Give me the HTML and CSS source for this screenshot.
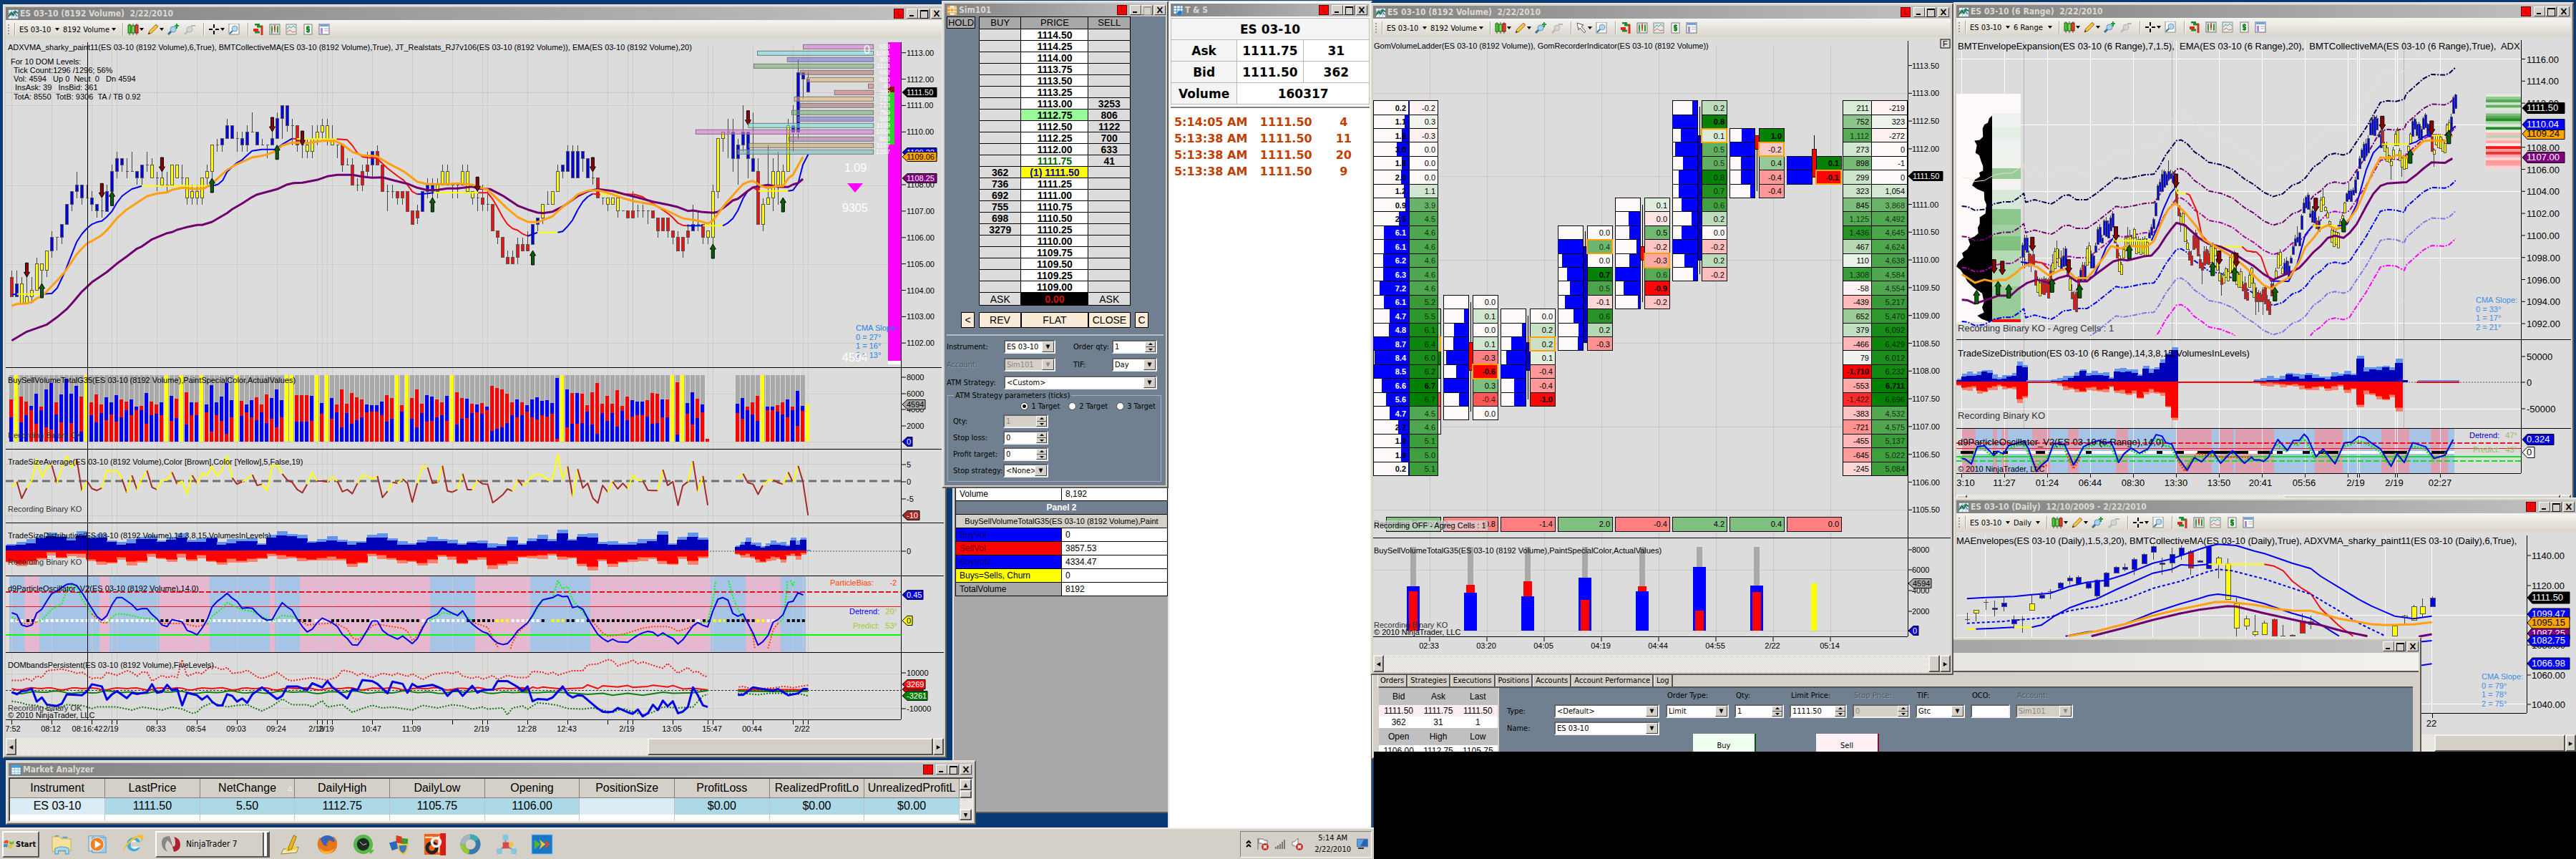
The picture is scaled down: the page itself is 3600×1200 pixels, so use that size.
FILE: index.html
```html
<!DOCTYPE html>
<html lang="en">
<head>
<meta charset="utf-8">
<title>NinjaTrader 7 workspace</title>
<link rel="stylesheet" href="styles.css">
</head>
<body>
<svg class="defs" aria-hidden="true">
  <symbol id="i-app" viewBox="0 0 16 16"><rect x="1" y="2" width="14" height="13" fill="#e8f2fa"/><path d="M1 6h14M1 10h14M6 2v13M11 2v13" stroke="#9ec3e0"/><path d="M1 12l4-6 3 4 3-6 4 3" fill="none" stroke="#1c7c2c" stroke-width="2"/><path d="M1 7l4 3 4-6 5 8" fill="none" stroke="#1d4fa0"/></symbol>
  <symbol id="i-candles" viewBox="0 0 16 16"><path d="M3 0v16M8 0v16M13 0v16" stroke="#444"/><rect x="1" y="2" width="4" height="11" fill="#4cc832" stroke="#1d6d12"/><rect x="6" y="3" width="4" height="10" fill="#7ce05c" stroke="#1d6d12"/><rect x="11" y="2" width="4" height="11" fill="#e8402c" stroke="#7c1208"/></symbol>
  <symbol id="i-pencil" viewBox="0 0 16 16"><path d="M1 15l2-5 9-9 3 3-9 9z" fill="#f4c63c" stroke="#a2701c"/><path d="M11 2l3 3 1-2-2-2z" fill="#e08878"/><path d="M1 15l1-3 2 2z" fill="#333"/></symbol>
  <symbol id="i-zoomin" viewBox="0 0 16 16"><path d="M1 15l5-5" stroke="#3a6ea0" stroke-width="3"/><circle cx="8" cy="8" r="4" fill="#a8d4f0" stroke="#5b93c0"/><path d="M13 0v7M10 3h6" stroke="#16a034" stroke-width="2"/></symbol>
  <symbol id="i-zoomout" viewBox="0 0 16 16"><path d="M1 15l5-5" stroke="#bbb" stroke-width="3"/><circle cx="8" cy="8" r="4" fill="#d6d6d6" stroke="#b4b4b4"/><path d="M10 3h6" stroke="#b4b4b4" stroke-width="2"/></symbol>
  <symbol id="i-cross" viewBox="0 0 16 16"><path d="M8 1v5M8 10v5M1 8h5M10 8h5" stroke="#000" stroke-width="2"/></symbol>
  <symbol id="i-cursor" viewBox="0 0 16 16"><path d="M2 1l9 3-3 2 6 7-2 2-6-7-2 3z" fill="#fff" stroke="#555"/></symbol>
  <symbol id="i-doc" viewBox="0 0 16 16"><rect x="1" y="0" width="14" height="15" fill="#fff" stroke="#888"/><path d="M2 14l5-5" stroke="#3a6ea0" stroke-width="2"/><circle cx="9" cy="7" r="4" fill="#b6d8ee" stroke="#6a98c0"/></symbol>
  <symbol id="i-trader" viewBox="0 0 16 16"><path d="M3 1h7M6 4h8M3 12h7" stroke="#1e8c28" stroke-width="3"/><path d="M1 9h7" stroke="#e02818" stroke-width="4"/><path d="M13 3v13" stroke="#d03020" stroke-width="3"/></symbol>
  <symbol id="i-bars" viewBox="0 0 16 16"><rect x="1" y="1" width="14" height="14" fill="#dfe6df" stroke="#777"/><path d="M4 3v11M8 2v10M12 3v10" stroke="#333"/><rect x="3" y="5" width="2" height="6" fill="#2ba01c"/><rect x="7" y="4" width="2" height="5" fill="#e03020"/><rect x="11" y="5" width="2" height="7" fill="#2ba01c"/></symbol>
  <symbol id="i-ind" viewBox="0 0 16 16"><rect x="1" y="1" width="14" height="14" fill="#e4e8e6" stroke="#888"/><path d="M2 8l3-4 3 2 3-3 3 3" fill="none" stroke="#3ca890"/><path d="M2 12l4-3 4 3 4-1" fill="none" stroke="#e06050"/></symbol>
  <symbol id="i-cash" viewBox="0 0 16 16"><rect x="3" y="1" width="11" height="14" fill="#fff" stroke="#777"/><path d="M11 5H7v3h3v3H6M8.500 3v10" fill="none" stroke="#1c9020" stroke-width="2"/></symbol>
  <symbol id="i-prop" viewBox="0 0 16 16"><rect x="1" y="0" width="14" height="15" fill="#fff" stroke="#668"/><rect x="2" y="1" width="12" height="3" fill="#6aa4dc"/><rect x="3" y="6" width="3" height="8" fill="#a888e0"/><path d="M8 7h6M8 10h6" stroke="#aaa"/></symbol>
</svg>

<main class="desktop">
  <div class="monitors">
    <section class="monitor-left">
      <footer class="taskbar">
        <button class="start"><svg width="16" height="16" viewBox="0 0 16 16"><path d="M1 4q3-3 6 0l-1 4q-3-2-6 0z" fill="#e85020"/><path d="M8 4q3 2 7 0l-1 4q-3 2-6 0z" fill="#7cbc28"/><path d="M0 9q3-2 6 0l-1 4q-3-2-6 0z" fill="#3c8cd8"/><path d="M7 9q3 2 6 0l-1 5q-3 1-6-1z" fill="#f4c020"/></svg>Start</button>
        <svg class="task-icon" viewBox="0 0 32 32"><path d="M2 5h10l3 3h14v18H2z" fill="#f5e19a" stroke="#c8a850"/><path d="M6 4h5M17 6h7" stroke="#4aa0e0" stroke-width="2"/><path d="M6 30v-8q10-5 20 0v8h-5v-5H11v5z" fill="#a8d8ee" stroke="#4b90b8"/></svg>
        <svg class="task-icon" viewBox="0 0 32 32"><path d="M3 4h22v22H3z" fill="#bfe0f4" stroke="#5b9cc8"/><path d="M8 6h20v22H8z" fill="#9fcbe8" stroke="#5b9cc8"/><circle cx="15" cy="16" r="10" fill="#f08020" stroke="#fff"/><path d="M12 10l9 6-9 6z" fill="#fff"/></svg>
        <svg class="task-icon" viewBox="0 0 32 32"><path d="M26 19a10 10 0 1 1 0-6H12v6z" fill="#38a8e8"/><path d="M12 13h9q-4-7-9 0zM12 19q4 6 10 2l6-2z" fill="#fff"/><path d="M2 29Q-1 22 10 11T30 3q2 5-4 10 3-7-2-7T10 15 2 29z" fill="#f4c030"/></svg>
        <button class="task-app"><svg width="30" height="24" viewBox="0 0 30 24"><path d="M13 1Q1 1 2 12q1 8 8 11-6-9 0-16 8 6 9 16z" fill="#888"/><path d="M13 0l3 14q4 4 5-2Q21 4 19 2q9 2 9 11 0 8-9 10z" fill="#b0202c"/></svg>NinjaTrader 7<i></i></button>
        <svg class="task-icon" viewBox="0 0 32 32"><path d="M4 23l22-3-3 8-22 2z" fill="#f0e8b0" stroke="#908030"/><path d="M8 20l14-2 3 5-17 3z" fill="#f4d040"/><path d="M19 3l4 2-7 18-5 2 1-6z" fill="#e8b820" stroke="#907010"/></svg>
        <svg class="task-icon" viewBox="0 0 32 32"><circle cx="16" cy="16" r="13" fill="#3464b8"/><path d="M5 6Q0 14 3 22q6 10 17 7t10-17Q28 6 24 4q4 7 1 9Q17 7 17 13q-4 1-1 5-6 1-8-5z" fill="#e8741c"/><path d="M3 18q8 14 24 4-8 12-19 6z" fill="#f8b42c"/></svg>
        <svg class="task-icon" viewBox="0 0 32 32"><circle cx="16" cy="16" r="14" fill="#56b848"/><path d="M22 24h10l-5 6z" fill="#56b848"/><circle cx="16" cy="16" r="9" fill="#1c2c24"/><path d="M11 12l5 5 5-2" fill="none" stroke="#dde"/></svg>
        <svg class="task-icon" viewBox="0 0 32 32"><path d="M12 3l8 2 1 10-9-1z" fill="#d83c1c"/><path d="M2 14l10-3 3 11-9 3z" fill="#2c68c0"/><path d="M20 7l9 1v12l-8-3z" fill="#3c9c30"/><path d="M15 17l13-1q1 10-6 14-7-3-7-13z" fill="#3878d0" stroke="#f0c828" stroke-width="2"/></svg>
        <svg class="task-icon" viewBox="0 0 32 32"><rect x="1" y="1" width="30" height="30" fill="#f06018"/><path d="M2 6h12M22 4v24" stroke="#fff0c0" stroke-width="2"/><rect x="24" width="8" height="32" fill="#d81c18"/><circle cx="12" cy="21" r="7" fill="none" stroke="#222" stroke-width="5"/><circle cx="18" cy="13" r="6" fill="none" stroke="#eee" stroke-width="4"/></svg>
        <svg class="task-icon" viewBox="0 0 32 32"><circle cx="16" cy="16" r="11" fill="none" stroke="#3c78a8" stroke-width="7"/><path d="M5 16a11 11 0 0 1 11-11" fill="none" stroke="#a8b4bc" stroke-width="7"/><path d="M5 16a11 11 0 0 0 9 11" fill="none" stroke="#98c838" stroke-width="7"/><path d="M16 5a11 11 0 0 1 9 5" fill="none" stroke="#38b0b0" stroke-width="7"/></svg>
        <svg class="task-icon" viewBox="0 0 32 32"><path d="M15 8v9L6 25M15 17l12 8M15 17l8-2" stroke="#889" fill="none" stroke-width="2"/><rect x="11" y="2" width="8" height="8" fill="#84c8e0"/><rect x="11" y="13" width="9" height="9" fill="#d84848"/><rect x="2" y="22" width="8" height="8" fill="#84c8e0"/><rect x="23" y="22" width="8" height="8" fill="#84c8e0"/><rect x="20" y="13" width="6" height="6" fill="#f0c430"/></svg>
        <svg class="task-icon" viewBox="0 0 32 32"><rect x="1" y="2" width="30" height="28" fill="#1878c8" stroke="#90c8f0"/><path d="M5 9l9 7-9 7z" fill="#58b030"/><path d="M12 9l9 7-9 7 3-7z" fill="#f4c828"/><path d="M19 9l9 7-9 7 3-7z" fill="#e04828"/></svg>
        <div class="tray">
          <svg width="8" height="14" viewBox="0 0 8 14"><path d="M1 6l3-3 3 3M1 11l3-3 3 3" fill="none" stroke="#000" stroke-width="2"/></svg>
          <svg width="16" height="18" viewBox="0 0 16 18"><path d="M1 1v16M2 2h6l2 2h4v6H8L6 8H2z" fill="#fff" stroke="#666"/><circle cx="11" cy="13" r="5" fill="#d82828"/><path d="M9 11l4 4M13 11l-4 4" stroke="#fff" stroke-width="2"/></svg>
          <svg width="16" height="14" viewBox="0 0 16 14"><path d="M2 14v-3M5 14V9M8 14V7M11 14V4M14 14V1" stroke="#777" stroke-width="2"/></svg>
          <svg width="16" height="18" viewBox="0 0 16 18"><path d="M1 6h3l5-5v15l-5-5H1z" fill="#fff" stroke="#777"/><circle cx="11" cy="13" r="5" fill="#d82828"/><path d="M9 11l4 4M13 11l-4 4" stroke="#fff" stroke-width="2"/></svg>
          <div class="clock"><span>5:14 AM</span><span>2/22/2010</span></div>
          <svg width="16" height="16" viewBox="0 0 16 16"><rect y="1" width="16" height="11" fill="#2464b0" stroke="#88b"/><path d="M1 2h9l-5 9H1z" fill="#58a0e0"/><path d="M2 14h8" stroke="#333" stroke-width="2"/></svg>
        </div>
      </footer>
    </section>
    <section class="monitor-right"></section>
  </div>

  <!-- 8192 volume chart -->
  <section class="window win-main">
    <header class="titlebar"><svg class="ico"><use href="#i-app"/></svg><h2>ES 03-10 (8192 Volume)&nbsp; 2/22/2010</h2><button class="lk">L</button><button class="wb min" aria-label="Minimize"></button><button class="wb max" aria-label="Maximize"></button><button class="wb close" aria-label="Close">×</button></header>
    <div class="toolbar" data-period="8192 Volume" data-cursor="cross"></div>
    <svg class="chart" id="chart-main" viewBox="8 54 1311 977">
      <g class="plot"></g>
      <g class="t11">
        <text x="11" y="70">ADXVMA_sharky_paint11(ES 03-10 (8192 Volume),6,True), BMTCollectiveMA(ES 03-10 (8192 Volume),True), JT_Realstats_RJ7v106(ES 03-10 (8192 Volume)), EMA(ES 03-10 (8192 Volume),20)</text>
        <text x="15" y="90">For 10 DOM Levels:</text>
        <text x="19" y="102">Tick Count:1296 /1296; 56%</text>
        <text x="19" y="114">Vol: 4594 &#160; Up 0 &#160;Neut &#160;0 &#160; Dn 4594</text>
        <text x="21" y="126">InsAsk: 39 &#160; InsBid: 361</text>
        <text x="19" y="139">TotA: 8550 &#160;TotB: 9306 &#160;TA / TB 0.92</text>
        <text x="11" y="535">BuySellVolumeTotalG35(ES 03-10 (8192 Volume),PaintSpecialColor,ActualValues)</text>
        <text x="11" y="612" class="dim">Recording Binary OK</text>
        <text x="11" y="649">TradeSizeAverage(ES 03-10 (8192 Volume),Color [Brown],Color [Yellow],5,False,19)</text>
        <text x="11" y="715" class="dim">Recording Binary KO</text>
        <text x="11" y="752">TradeSizeDistribution(ES 03-10 (8192 Volume),14,3,8,15,VolumesInLevels)</text>
        <text x="11" y="789" class="dim">Recording Binary KO</text>
        <text x="11" y="826">d9ParticleOscillator_V2(ES 03-10 (8192 Volume),14,0)</text>
        <text x="11" y="933">DOMbandsPersistent(ES 03-10 (8192 Volume),FiveLevels)</text>
        <text x="11" y="993" class="dim">Recording Binary OK</text>
        <text x="11" y="1003">© 2010 NinjaTrader, LLC</text>
        <text x="1160" y="818" fill="#ff4500">ParticleBias:</text><text x="1253" y="818" fill="#ff4500" text-anchor="end">-2</text>
        <text x="1187" y="858" fill="#00f">Detrend:</text><text x="1254" y="858" fill="#9acd32" text-anchor="end">20°</text>
        <text x="1192" y="878" fill="#9acd32">Predict:</text><text x="1254" y="878" fill="#9acd32" text-anchor="end">53°</text>
        <g fill="#1e82e6"><text x="1196" y="462">CMA Slope:</text><text x="1196" y="475">0 = 27°</text><text x="1196" y="487">1 = 16°</text><text x="1196" y="500">2 = 13°</text></g>
      </g>
      <g class="t16" fill="#fff"><text x="1207" y="75">0</text><text x="1180" y="240">1.09</text><text x="1177" y="296">9305</text><text x="1177" y="505">4594</text></g>
    </svg>
    <div class="hscroll"><button aria-label="Scroll left">◂</button><i class="thumb thumb-main"></i><button aria-label="Scroll right">▸</button></div>
  </section>

  <!-- data box -->
  <section class="window win-data">
    <table class="databox">
      <tr><td>Volume</td><td>8,192</td></tr>
      <tr class="panel"><th colspan="2">Panel 2</th></tr>
      <tr class="sub"><td colspan="2">BuySellVolumeTotalG35(ES 03-10 (8192 Volume),Paint</td></tr>
      <tr><td class="blue">BuyVol</td><td>0</td></tr>
      <tr><td class="red">SellVol</td><td>3857.53</td></tr>
      <tr><td class="blue">BuyVol2</td><td>4334.47</td></tr>
      <tr><td class="yellow">Buys=Sells, Churn</td><td>0</td></tr>
      <tr><td class="gray">TotalVolume</td><td>8192</td></tr>
    </table>
  </section>

  <!-- market analyzer -->
  <section class="window win-analyzer">
    <header class="titlebar"><svg class="ico" viewBox="0 0 16 16"><rect x="1" y="1" width="14" height="14" fill="#fff" stroke="#48a"/><rect x="1" y="1" width="14" height="4" fill="#48a0e0"/><path d="M1 8h14M1 12h14M6 5v10M11 5v10" stroke="#8bd"/></svg><h2>Market Analyzer</h2><button class="lk">L</button><button class="wb min" aria-label="Minimize"></button><button class="wb max" aria-label="Maximize"></button><button class="wb close" aria-label="Close">×</button></header>
    <div class="analyzer-body">
      <div class="analyzer-view">
        <table class="analyzer">
          <tr><th>Instrument</th><th>LastPrice</th><th class="sorted">NetChange</th><th>DailyHigh</th><th>DailyLow</th><th>Opening</th><th>PositionSize</th><th>ProfitLoss</th><th>RealizedProfitLo</th><th>UnrealizedProfitL</th></tr>
          <tr class="row"><td class="pale">ES 03-10</td><td>1111.50</td><td>5.50</td><td>1112.75</td><td>1105.75</td><td>1106.00</td><td class="pale"></td><td>$0.00</td><td>$0.00</td><td>$0.00</td></tr>
          <tr class="rest"><td></td><td></td><td></td><td></td><td></td><td></td><td></td><td></td><td></td><td></td></tr>
        </table>
      </div>
      <div class="vscroll"><button aria-label="Scroll up">▴</button><i class="vthumb"></i><button aria-label="Scroll down">▾</button></div>
    </div>
  </section>

  <!-- time and sales -->
  <section class="window win-ts">
    <header class="titlebar"><svg class="ico" viewBox="0 0 16 16"><rect x="1" y="1" width="14" height="12" fill="#fff" stroke="#48a"/><path d="M1 5h14M1 9h14M6 1v12M11 1v12" stroke="#48c"/><path d="M5 13l5-5 5 3-5 5z" fill="#2878d0"/></svg><h2>T &amp; S</h2><button class="lk">L</button><button class="wb min" aria-label="Minimize"></button><button class="wb max" aria-label="Maximize"></button><button class="wb close" aria-label="Close">×</button></header>
    <table class="ts-head">
      <tr><th colspan="3">ES 03-10</th></tr>
      <tr><th>Ask</th><td>1111.75</td><td>31</td></tr>
      <tr><th>Bid</th><td>1111.50</td><td>362</td></tr>
      <tr><th>Volume</th><td colspan="2">160317</td></tr>
    </table>
    <table class="ts-list">
      <tr><td>5:14:05 AM</td><td>1111.50</td><td>4</td></tr>
      <tr><td>5:13:38 AM</td><td>1111.50</td><td>11</td></tr>
      <tr><td>5:13:38 AM</td><td>1111.50</td><td>20</td></tr>
      <tr><td>5:13:38 AM</td><td>1111.50</td><td>9</td></tr>
    </table>
  </section>

  <!-- SuperDOM -->
  <section class="window win-dom">
    <header class="titlebar"><svg class="ico" viewBox="0 0 16 16"><rect x="1" y="1" width="14" height="14" fill="#f0ede0"/><rect x="1" y="1" width="4" height="14" fill="#e8a040"/><rect x="6" y="4" width="4" height="8" fill="#e8a040"/><rect x="11" y="1" width="4" height="14" fill="#e8b868"/><path d="M1 5h14M1 10h14" stroke="#fff"/></svg><h2>Sim101</h2><button class="lk">L</button><button class="wb min" aria-label="Minimize"></button><button class="wb max off" aria-label="Maximize"></button><button class="wb close" aria-label="Close">×</button></header>
    <div class="dom-body">
      <div class="dom-top"><button class="hold">HOLD</button><table class="ladder" id="ladder"><tr><th>BUY</th><th>PRICE</th><th>SELL</th></tr></table></div>
      <div class="dom-actions"><button class="sm">&lt;</button><div><button>REV</button><button>FLAT</button><button>CLOSE</button></div><button class="sm">C</button></div>
      <hr>
      <div class="dom-form">
        <label for="ins">Instrument:</label><span class="combo"><select id="ins"><option>ES 03-10</option></select></span><label for="oq" class="second">Order qty:</label><span class="spin"><input id="oq" value="1"><i></i></span>
        <label for="acc" class="off">Account:</label><span class="combo off"><select id="acc" disabled><option>Sim101</option></select></span><label for="tif" class="second">TIF:</label><span class="combo"><select id="tif"><option>Day</option></select></span>
        <label for="atm">ATM Strategy:</label><span class="combo wide"><select id="atm"><option>&lt;Custom&gt;</option></select></span>
      </div>
      <fieldset>
        <legend>ATM Strategy parameters (ticks)</legend>
        <div class="radios"><label><input type="radio" name="tg" checked>1 Target</label><label><input type="radio" name="tg">2 Target</label><label><input type="radio" name="tg">3 Target</label></div>
        <div class="params">
          <label for="q">Qty:</label><span class="spin off"><input id="q" value="1" disabled><i></i></span>
          <label for="sl">Stop loss:</label><span class="spin"><input id="sl" value="0"><i></i></span>
          <label for="pt">Profit target:</label><span class="spin"><input id="pt" value="0"><i></i></span>
          <label for="ss">Stop strategy:</label><span class="combo"><select id="ss"><option>&lt;None&gt;</option></select></span>
        </div>
      </fieldset>
    </div>
  </section>

  <!-- 6 range chart -->
  <section class="window win-range">
    <header class="titlebar"><svg class="ico"><use href="#i-app"/></svg><h2>ES 03-10 (6 Range)&nbsp; 2/22/2010</h2><button class="lk">L</button><button class="wb min" aria-label="Minimize"></button><button class="wb max" aria-label="Maximize"></button><button class="wb close" aria-label="Close">×</button></header>
    <div class="toolbar" data-period="6 Range" data-cursor="cross"></div>
    <svg class="chart" id="chart-range" viewBox="2734 51 859 640">
      <defs><clipPath id="clip-range"><rect x="2734" y="57" width="789" height="412"/></clipPath></defs>
      <g class="plot"></g>
      <g class="t13">
        <svg x="2734" y="52" width="789" height="20" viewBox="2734 52 789 20"><text x="2736" y="69">BMTEnvelopeExpansion(ES 03-10 (6 Range),7,1.5),&#160; EMA(ES 03-10 (6 Range),20),&#160; BMTCollectiveMA(ES 03-10 (6 Range),True),&#160; ADX</text></svg>
        <text x="2736" y="463" class="dim">Recording Binary KO - Agreg Cells : 1</text>
        <text x="2736" y="498">TradeSizeDistribution(ES 03-10 (6 Range),14,3,8,15,VolumesInLevels)</text>
        <text x="2736" y="585" class="dim">Recording Binary KO</text>
        <text x="2736" y="622">d9ParticleOscillator_V2(ES 03-10 (6 Range),14,0)</text>
      </g>
      <g class="t11">
        <text x="2736" y="659">© 2010 NinjaTrader, LLC</text>
        <text x="3451" y="612" fill="#0000c8">Detrend:</text><text x="3518" y="612" fill="#9ab862" text-anchor="end">47°</text>
        <text x="3456" y="632" fill="#9ab862">Predict:</text><text x="3518" y="632" fill="#9ab862" text-anchor="end">43°</text>
        <g fill="#3b8ee8"><text x="3460" y="423">CMA Slope:</text><text x="3460" y="436">0 = 33°</text><text x="3460" y="448">1 = 17°</text><text x="3460" y="461">2 = 21°</text></g>
      </g>
    </svg>
    <div class="hscroll"><button aria-label="Scroll left">◂</button><i class="thumb thumb-range"></i><button aria-label="Scroll right">▸</button></div>
  </section>

  <!-- daily chart -->
  <section class="window win-daily">
    <header class="titlebar"><svg class="ico"><use href="#i-app"/></svg><h2>ES 03-10 (Daily)&nbsp; 12/10/2009 - 2/22/2010</h2><button class="lk">L</button><button class="wb min" aria-label="Minimize"></button><button class="wb max" aria-label="Maximize"></button><button class="wb close" aria-label="Close">×</button></header>
    <div class="toolbar" data-period="Daily" data-cursor="cross"></div>
    <svg class="chart" id="chart-daily" viewBox="2734 743 866 283">
      <g class="plot"></g>
      <svg class="t13" x="2730" y="743" width="800" height="22" viewBox="2730 743 800 22"><text x="2734" y="760">MAEnvelopes(ES 03-10 (Daily),1.5,3,20), BMTCollectiveMA(ES 03-10 (Daily),True), ADXVMA_sharky_paint11(ES 03-10 (Daily),6,True),</text></svg>
      <g class="t11" fill="#3b8ee8"><text x="3468" y="949">CMA Slope:</text><text x="3468" y="962">0 = 79°</text><text x="3468" y="974">1 = 78°</text><text x="3468" y="987">2 = 75°</text></g>
    </svg>
    <div class="hscroll"><button aria-label="Scroll left">◂</button><i class="thumb thumb-daily"></i><button aria-label="Scroll right">▸</button></div>
  </section>

  <!-- control center -->
  <section class="window win-cc">
    <header class="titlebar"><h2></h2><button class="wb min" aria-label="Minimize"></button><button class="wb max" aria-label="Maximize"></button><button class="wb close" aria-label="Close">×</button></header>
    <div class="menu"></div>
    <nav class="tabs"><button class="on">Orders</button><button>Strategies</button><button>Executions</button><button>Positions</button><button>Accounts</button><button>Account Performance</button><button>Log</button></nav>
    <div class="cc-body">
      <table class="quotes">
        <tr class="h"><th>Bid</th><th>Ask</th><th>Last</th></tr>
        <tr class="p"><td>1111.50</td><td>1111.75</td><td>1111.50</td></tr>
        <tr><td>362</td><td>31</td><td>1</td></tr>
        <tr class="h"><th>Open</th><th>High</th><th>Low</th></tr>
        <tr><td>1106.00</td><td>1112.75</td><td>1105.75</td></tr>
      </table>
      <form class="entry">
        <div class="names"><label for="ty">Type:</label><span class="combo"><select id="ty"><option>&lt;Default&gt;</option></select></span><label for="nm">Name:</label><span class="combo"><select id="nm"><option>ES 03-10</option></select></span></div>
        <div class="order">
          <div class="fields">
            <div class="f88"><label for="ot">Order Type:</label><span class="combo"><select id="ot"><option>Limit</option></select></span></div>
            <div class="f69"><label for="cq">Qty:</label><span class="spin"><input id="cq" value="1"><i></i></span></div>
            <div class="f80"><label for="lp">Limit Price:</label><span class="spin"><input id="lp" value="1111.50"><i></i></span></div>
            <div class="f80"><label for="sp" class="off">Stop Price:</label><span class="spin off"><input id="sp" value="0" disabled><i></i></span></div>
            <div class="f69"><label for="ct">TIF:</label><span class="combo"><select id="ct"><option>Gtc</option></select></span></div>
            <div class="f54"><label for="oco">OCO:</label><span class="spin"><input id="oco" value=""></span></div>
            <div class="f80"><label for="ca" class="off">Account:</label><span class="combo off"><select id="ca" disabled><option>Sim101</option></select></span></div>
          </div>
          <div class="buysell"><button type="button" class="buy">Buy</button><button type="button" class="sell">Sell</button></div>
        </div>
      </form>
    </div>
  </section>

  <!-- volume ladder chart -->
  <section class="window win-gom">
    <header class="titlebar"><svg class="ico"><use href="#i-app"/></svg><h2>ES 03-10 (8192 Volume)&nbsp; 2/22/2010</h2><button class="lk">L</button><button class="wb min" aria-label="Minimize"></button><button class="wb max" aria-label="Maximize"></button><button class="wb close" aria-label="Close">×</button></header>
    <div class="toolbar" data-period="8192 Volume" data-cursor="cursor"></div>
    <svg class="chart" id="chart-gom" viewBox="1919 52 807 863">
      <g class="plot"></g>
      <g class="t11">
        <text x="1920" y="68">GomVolumeLadder(ES 03-10 (8192 Volume)), GomRecorderIndicator(ES 03-10 (8192 Volume))</text>
        <text x="1920" y="735">Recording Binary KO</text>
        <rect x="1920" y="727" width="159" height="14" fill="#dcdcdc" opacity=".7"/>
        <text x="1920" y="738">Recording OFF - Agreg Cells : 1</text>
        <text x="1920" y="773">BuySellVolumeTotalG35(ES 03-10 (8192 Volume),PaintSpecialColor,ActualValues)</text>
        <text x="1920" y="877" class="dim">Recording Binary KO</text>
        <text x="1920" y="887">© 2010 NinjaTrader, LLC</text>
        <rect x="2712" y="55" width="13" height="12" fill="none" stroke="#000"/><text x="2715" y="65">F</text>
      </g>
    </svg>
    <div class="hscroll"><button aria-label="Scroll left">◂</button><i class="thumb thumb-gom"></i><button aria-label="Scroll right">▸</button></div>
  </section>
  <div class="offscreen"></div>
</main>
<script src="app.js"></script>
</body>
</html>
```
FILE: styles.css
```css
* { box-sizing: border-box; }
body { margin: 0; background: #000; font: 11px "DejaVu Sans Condensed", "DejaVu Sans", sans-serif; color: #000; }
button, select, input { font: inherit; color: inherit; margin: 0; padding: 0; border: 0; border-radius: 0; }
table { border-collapse: collapse; }
.defs { position: absolute; width: 0; height: 0; }
.desktop { position: relative; height: 100vh; min-height: 1200px; overflow: hidden; }
.monitors { display: grid; grid-template-columns: 1920fr 1680fr; height: 100%; background: #0a3a76; }
.monitor-left { display: flex; flex-direction: column; justify-content: flex-end; }
.offscreen { position: absolute; left: 53.334%; right: 0; top: 1050px; bottom: 0; background: #000; z-index: 20; }

/* windows */
.window { position: absolute; display: flex; flex-direction: column; background: #d4d0c8; padding: 2px; border: 2px solid; border-color: #e8e5de #5a5a58 #5a5a58 #e8e5de; }
.win-main { left: .111%; width: 36.639%; top: 6px; z-index: 1; }
.win-data { left: 36.972%; width: 8.472%; top: 676px; height: 460px; z-index: 2; background: #a8a8a8; }
.win-analyzer { left: .222%; width: 37.667%; top: 1062px; z-index: 3; }
.win-ts { left: 45.333%; width: 7.945%; top: 1px; height: 1157px; z-index: 4; background: #fff; }
.win-dom { left: 36.555%; width: 8.806%; top: 1px; z-index: 5; }
.win-range { left: 75.833%; width: 24.084%; top: 3px; z-index: 5; }
.win-daily { left: 75.833%; width: 24.278%; top: 695px; z-index: 6; }
.win-cc { left: 53.25%; width: 40.75%; top: 890px; height: 170px; z-index: 7; }
.win-gom { left: 53.194%; width: 22.639%; top: 4px; z-index: 8; }
.titlebar { display: flex; align-items: center; height: 18px; padding: 0 2px 0 3px; background: linear-gradient(90deg, #828282, #c2c2c2); flex: none; }
.titlebar h2 { flex: 1; margin: 0 0 0 2px; font: bold 12px "DejaVu Sans Condensed", sans-serif; color: #dcd9d2; white-space: nowrap; }
.win-dom .titlebar { padding-right: 0; }
.win-ts .titlebar { padding-right: 3px; }
.ico { width: 15px; height: 15px; flex: none; }
.lk { width: 14px; height: 14px; background: #f00; border: 1px solid #600; color: #900; font-size: 10px; line-height: 12px; margin-right: 4px; flex: none; }
.wb { position: relative; width: 16px; height: 14px; background: #d4d0c8; border: 1px solid; border-color: #fff #404040 #404040 #fff; line-height: 11px; font-size: 15px; font-weight: bold; flex: none; }
.wb.close { margin-left: 2px; }
.wb.min::after { content: ""; position: absolute; left: 3px; bottom: 2px; width: 6px; height: 2px; background: #000; }
.wb.max::after { content: ""; position: absolute; left: 2px; top: 1px; width: 9px; height: 9px; border: 1px solid #000; border-top-width: 2px; }
.wb.off::after { border-color: #a09c94; }
.toolbar { display: flex; align-items: center; height: 26px; padding-left: 3px; background: linear-gradient(#f5f4f0, #d9d5cb); flex: none; }
.grip { width: 3px; height: 14px; border-left: 2px dotted #a09c94; margin-right: 2px; }
.toolbar b { width: 2px; height: 18px; border-left: 1px solid #a8a49a; border-right: 1px solid #fff; margin: 0 5px 0 4px; flex: none; }
.toolbar .pick { display: flex; align-items: center; margin-right: 5px; }
.toolbar .pick::after, .toolbar .drop::after { content: ""; border: 3px solid transparent; border-top: 4px solid #000; border-bottom: 0; }
.toolbar select { appearance: none; background: none; width: 50px; }
.toolbar .per select { width: 68px; }
.toolbar .per.short select { width: 48px; }
.toolbar .per.tiny select { width: 31px; }
.toolbar button { display: flex; align-items: center; background: none; margin-right: 7px; }
.toolbar .drop { margin-right: 5px; gap: 1px; }
.toolbar svg { width: 16px; height: 16px; }
.chart { display: block; width: 100%; height: auto; background: #dcdcdc; flex: none; font-family: "Liberation Sans", Arial, sans-serif; }
.plot { font-size: 11px; }
.t11 { font-size: 11px; }
.t13 { font-size: 13px; }
.t16 { font-size: 16px; }
.dim { fill: #333; }
.crisp { shape-rendering: crispEdges; }
.hscroll { display: flex; height: 24px; background: repeating-conic-gradient(#fff 0 25%, #d4d0c8 0 50%) 0 0 / 2px 2px; flex: none; }
.hscroll button, .vscroll button, .thumb, .vthumb { background: #d4d0c8; border: 2px solid; border-color: #f4f2ee #555 #555 #f4f2ee; }
.hscroll button { width: 15px; font-size: 12px; line-height: 12px; }
.thumb { margin-left: auto; }
.thumb-main { width: 30.4%; }
.thumb-gom { width: 2%; }
.thumb-range { width: 45%; }
.thumb-daily { width: 21.1%; }

/* taskbar */
.taskbar { position: relative; z-index: 19; display: flex; align-items: center; height: 44px; padding: 2px 3px; background: #d4d0c8; border-top: 2px solid #f2f0ec; gap: 19px; }
.start, .task-app { display: flex; align-items: center; background: #d4d0c8; border: 2px solid; border-color: #fff #555 #555 #fff; height: 37px; }
.start { width: 52px; font-weight: bold; font-size: 11px; gap: 1px; margin-right: -3px; }
.task-app { position: relative; width: 160px; margin: 0 -4px; padding-left: 5px; gap: 6px; font-size: 12px; }
.task-app i { position: absolute; right: 0; top: 0; bottom: 0; width: 8px; border-left: 2px solid #555; border-right: 2px solid #555; background: #fff; }
.task-icon { width: 31px; height: 31px; flex: none; }
.tray { display: flex; align-items: center; gap: 8px; margin-left: auto; height: 37px; padding: 0 4px 0 7px; border: 1px solid; border-color: #808080 #fff #fff #808080; }
.clock { display: flex; flex-direction: column; align-items: center; line-height: 16px; margin-left: 8px; }

/* data box */
.databox { width: 100%; table-layout: fixed; background: #fff; }
.databox td, .databox th { height: 19px; padding: 0 5px; border: 1px solid #000; font: 12px "Liberation Sans", Arial, sans-serif; white-space: nowrap; }
.databox .panel th { background: #708090; color: #fff; font-weight: bold; }
.databox .sub td { background: #d4d0c8; text-align: center; font-size: 11px; }
.databox .blue { background: #00f; color: #000070; }
.databox .red { background: #f00; color: #700000; }
.databox .yellow { background: #ff0; }
.databox .gray { background: #a8a8a8; }

/* market analyzer */
.analyzer-body { display: flex; margin-top: 2px; border: 2px solid; border-color: #444 #eee #eee #444; background: #fff; }
.analyzer-view { flex: 1; min-width: 0; }
.analyzer { width: 100%; table-layout: fixed; font: 16px "Liberation Sans", Arial, sans-serif; }
.analyzer th { height: 26px; padding: 0; font-weight: normal; background: #d4d0c8; border-right: 1px solid #808080; border-bottom: 1px solid #808080; white-space: nowrap; }
.analyzer .sorted { position: relative; }
.analyzer .sorted::after { content: "△"; position: absolute; right: 2px; top: 8px; font-size: 9px; color: #fff; }
.analyzer td { padding: 0; text-align: center; border-right: 1px solid #c0c0c8; }
.analyzer .row td { height: 24px; background: #add8e6; }
.analyzer .row td.pale { background: #dcecf5; }
.analyzer .rest td { height: 8px; }
.vscroll { width: 17px; display: flex; flex-direction: column; flex: none; background: repeating-conic-gradient(#fff 0 25%, #d4d0c8 0 50%) 0 0 / 2px 2px; }
.vscroll button { height: 16px; font-size: 12px; line-height: 10px; }
.vthumb { height: 11px; margin-bottom: auto; }

/* time and sales */
.ts-head, .ts-list { width: 100%; font: bold 17px "DejaVu Sans", sans-serif; text-align: center; table-layout: fixed; }
.ts-head { margin-top: 2px; }
.ts-head td, .ts-head th { height: 30px; padding: 0; border: 1px solid #b8b8b8; }
.ts-head th { background: #f4f4f4; }
.ts-list { margin-top: 3px; padding-top: 8px; border-top: 2px solid #808080; border-collapse: separate; border-spacing: 0; color: #c04000; font-size: 16px; }
.ts-list td { height: 23px; padding: 0; white-space: nowrap; }
.ts-list td:first-child { width: 42%; text-align: left; padding-left: 5px; }
.ts-list td:nth-child(2) { width: 32%; }

/* superdom */
.dom-body { background: #708090; padding: 0 3px 5px; }
.dom-top { display: flex; gap: 5px; align-items: flex-start; }
.hold { width: 40px; height: 17px; background: #a8a8a8; border: 1px solid #000; font: 13px "Liberation Sans", sans-serif; }
.ladder { width: 212px; table-layout: fixed; font: bold 14px/14px "Liberation Sans", Arial, sans-serif; text-align: center; }
.ladder th:nth-child(2) { width: 94px; }
.ladder th { background: #a8a8a8; height: 17px; font: 13px/14px "Liberation Sans", Arial, sans-serif; }
.ladder th, .ladder td { border: 1px solid #000; padding: 0; }
.ladder td { height: 16px; background: #dcdcdc; }
.ladder td:nth-child(2) { background: #fff; }
.ladder .high td:nth-child(2) { background: #98fb98; }
.ladder .ask td:nth-child(2) { color: #006400; }
.ladder .bid td:nth-child(2) { background: #ff0; color: #0000b0; }
.ladder .foot td { height: 18px; font-weight: normal; }
.ladder .foot td:nth-child(2) { background: #000; color: #d01010; font-weight: bold; }
.dom-actions { display: flex; gap: 6px; margin: 9px 0 9px 20px; font: 14px "Liberation Sans", Arial, sans-serif; }
.dom-actions div { display: grid; grid-template-columns: 59px 94px 59px; }
.dom-actions button { height: 22px; background: #faebd7; border: 1px solid #000; }
.dom-actions .sm { width: 19px; }
.dom-body hr { margin: 0 0 6px; border: 0; border-top: 2px solid #b4bcc8; }
.dom-form { display: grid; grid-template-columns: 80px 72px 79px 63px; row-gap: 6px; align-items: center; }
.second { padding-left: 25px; white-space: nowrap; }
.dom-form .wide { grid-column: span 3; }
label.off { color: #505a66; text-shadow: 1px 1px #98a4b0; }
.combo, .spin { position: relative; display: block; height: 19px; background: #fff; border: 2px solid; border-color: #606468 #f0f0f0 #f0f0f0 #606468; }
.combo select, .spin input { display: block; width: 100%; height: 100%; appearance: none; background: none; padding: 0 2px; outline: 0; }
.combo::after { content: "▾"; position: absolute; right: 0; top: 0; bottom: 0; width: 15px; background: #d4d0c8; border: 1px solid; border-color: #fff #404040 #404040 #fff; font-size: 13px; line-height: 12px; text-align: center; pointer-events: none; }
.spin i { position: absolute; right: 0; top: 0; bottom: 0; width: 15px; background: linear-gradient(#d4d0c8 45%, #555 45% 55%, #d4d0c8 55%); border: 1px solid; border-color: #fff #404040 #404040 #fff; }
.spin i::before, .spin i::after { content: ""; position: absolute; left: 4px; border: 3px solid transparent; }
.spin i::before { top: 1px; border-top: 0; border-bottom: 3px solid #000; }
.spin i::after { bottom: 1px; border-bottom: 0; border-top: 3px solid #000; }
.combo.off, .spin.off { background: #d4d0c8; color: #8a8680; }
.combo.off select, .spin.off input { color: #8a8680; opacity: 1; }
.combo.off::after { color: #8a8680; }
fieldset { margin: 2px 3px 0 1px; padding: 2px 7px 5px; border: 1px solid #a4aebc; }
legend { margin-left: 1px; padding: 0 2px; }
.radios { display: flex; justify-content: flex-end; gap: 12px; margin-bottom: 5px; }
.radios label { display: flex; align-items: center; gap: 4px; }
.radios input { appearance: none; width: 11px; height: 11px; border-radius: 50%; background: #fff; border: 1px solid #444; }
.radios input:checked { background: radial-gradient(#000 0 2px, #fff 3px); }
.params { display: grid; grid-template-columns: 70px 63px; row-gap: 4px; align-items: center; white-space: nowrap; }

/* control center */
.win-cc .titlebar { padding-right: 0; }
.menu { height: 27px; background: linear-gradient(90deg, #d8d5cc, #f2f1ee); border-bottom: 2px solid #555; flex: none; }
.tabs { display: flex; height: 20px; padding: 2px 0 0 4px; flex: none; }
.tabs button { background: #d4d0c8; border-right: 2px solid #555; border-left: 1px solid #fff; padding: 0 3px; white-space: nowrap; }
.cc-body { display: flex; margin-left: 6px; margin-right: 8px; border-top: 2px solid #555; flex: 1; }
.quotes { width: 166px; background: #fff; text-align: center; font: 12px "Liberation Sans", Arial, sans-serif; table-layout: fixed; }
.quotes td { height: 16px; padding: 0; }
.quotes th { height: 24px; padding: 0; font-weight: normal; background: #c0c0c0; }
.quotes .p td { background: #fdeef2; }
.entry { flex: 1; display: flex; margin-left: 2px; padding: 3px 0 0 11px; background: #708090; }
.names { display: grid; grid-template-columns: 66px 147px; row-gap: 5px; height: 63px; align-content: end; align-items: center; }
.order { margin-left: 9px; }
.fields { display: flex; gap: 8px; }
.fields label { display: block; height: 20px; line-height: 16px; padding-left: 2px; white-space: nowrap; }
.f54 { width: 55px; } .f69 { width: 69px; } .f80 { width: 80px; } .f88 { width: 88px; }
.buysell { display: flex; gap: 84px; margin: 22px 0 0 38px; }
.buysell button { width: 88px; height: 32px; border-right: 2px solid #0a5010; }
.buysell .buy { background: #f0fff0; }
.buysell .sell { background: #fff0f5; border-right-color: #801030; }
```
FILE: app.js
```js
// ---------- drawing helpers ----------
const mapper = (ox, oy, sx, sy) => ([x, y]) => [ox + x / sx, oy + y / sy];
const parse = s => s.trim().split(/\s+/).map(p => p.split(',').map(Number));
const f1 = n => Math.round(n * 10) / 10;
const pts = (M, s) => parse(s).map(M);
const d = a => a.map(p => f1(p[0]) + ',' + f1(p[1])).join(' ');
const line = (a, c, w = 1, extra = '') => `<polyline points="${d(a)}" fill="none" stroke="${c}" stroke-width="${w}" stroke-linejoin="round" ${extra}/>`;
const rect = (x, y, w, h, c, extra = '') => `<rect x="${f1(x)}" y="${f1(y)}" width="${f1(Math.max(w, 0))}" height="${f1(Math.max(h, 0))}" fill="${c}" ${extra}/>`;
const seg = (x1, y1, x2, y2, c = '#000', w = 1, extra = '') => `<line x1="${f1(x1)}" y1="${f1(y1)}" x2="${f1(x2)}" y2="${f1(y2)}" stroke="${c}" stroke-width="${w}" ${extra}/>`;
const text = (x, y, s, extra = '') => `<text x="${f1(x)}" y="${f1(y)}" ${extra}>${s}</text>`;
const mid = 'text-anchor="middle"', end = 'text-anchor="end"';
const COL = { r: '#f01010', b: '#0000e8', y: '#ffff00', x: '#555', g: '#00ff00', o: '#ff4500', n: '#a52a2a', k: '#000', w: '#fff' };
const tag = (x, y, w, s, fill, fg, h = 13) => `<path d="M${x} ${y}l7 ${-h / 2}h${w}v${h}h${-w}z" fill="${fill}" stroke="#000"/>` + text(x + 6, y + 4, s, `fill="${fg}"`);
// series made of coloured runs; each run continues from the end of the last, ";" lifts the pen
function runs(M, s, w, extra) {
  let out = '';
  s.split(';').forEach(part => {
    let last = null;
    part.split('|').forEach(r => {
      r = r.trim();
      const a = pts(M, r.slice(1));
      out += line(last ? [last, ...a] : a, COL[r[0]], w, extra);
      last = a[a.length - 1];
    });
  });
  return out;
}
function arrow(x, y, up, h = 20, w = 8) {
  const k = up ? 1 : -1, s = w / 2;
  return `<path d="M${f1(x)} ${f1(y)}l${s} ${k * 7}h-2v${k * (h - 7)}h${4 - w}v${-k * (h - 7)}h-2z" fill="${up ? '#006400' : '#8b0000'}" stroke="#000"/>`;
}
const candle = (x, c, h, t, b, l, w) => seg(x, h, x, l, '#444') + (c === 'x' ? seg(x - w / 2, t, x + w / 2, t, '#555') : rect(x - w / 2, t, w, b - t, COL[c], 'stroke="#555" stroke-width="1"'));
function put(id, s) { document.querySelector('#' + id + ' .plot').innerHTML = s; }
// layered histogram above and below a base line
function dist(x0, step, base, up, dn) {
  let o = '';
  up.forEach((v, i) => {
    const x = x0 + i * step, e = (i * 7 % 5) + 2, q = dn[i];
    o += rect(x, base - v - e, step + 1, v + e, '#6495ed') + rect(x - 1, base - v, step + 2, v, '#0000b8');
    o += rect(x, base, step + 1, q + e, '#fa8072') + rect(x - 1, base, step + 2, q + 1, '#ff4500') + rect(x - 1, base, step + 2, q, '#ff0000');
  });
  return `<g class="crisp">${o}</g>`;
}

// ---------- toolbars ----------
document.querySelectorAll('.toolbar').forEach(t => {
  const p = t.dataset.period, c = t.dataset.cursor;
  const cls = p === 'Daily' ? 'tiny' : p === '6 Range' ? 'short' : '';
  const b = (n, drop) => `<button aria-label="${n}" class="${drop ? 'drop' : ''}"><svg><use href="#i-${n}"/></svg></button>`;
  t.innerHTML = `<span class="grip"></span><b></b><span class="pick"><select aria-label="Instrument"><option>ES 03-10</option></select></span>
    <span class="pick per ${cls}"><select aria-label="Period"><option>${p}</option></select></span><b></b>` +
    b('candles', 1) + b('pencil', 1) + b('zoomin') + b('zoomout') + '<b></b>' + b(c, 1) + b('doc') + '<b></b>' + b('trader') + b('bars') + b('ind') + b('cash') + b('prop');
});

// ---------- SuperDOM ladder ----------
(() => {
  const sell = { 1113: 3253, 1112.75: 806, 1112.5: 1122, 1112.25: 700, 1112: 633, 1111.75: 41 };
  const buy = { 1111.5: 362, 1111.25: 736, 1111: 692, 1110.75: 755, 1110.5: 698, 1110.25: 3279 };
  let o = '';
  for (let p = 1114.5; p >= 1109; p -= .25) {
    const c = p === 1112.75 ? 'high' : p === 1111.75 ? 'ask' : p === 1111.5 ? 'bid' : '';
    o += `<tr class="${c}"><td>${buy[p] || ''}</td><td>${p === 1111.5 ? '(1) ' : ''}${p.toFixed(2)}</td><td>${sell[p] || ''}</td></tr>`;
  }
  document.querySelector('#ladder tbody').insertAdjacentHTML('beforeend', o + '<tr class="foot"><td>ASK</td><td>0.00</td><td>ASK</td></tr>');
})();

// ---------- main chart ----------
(() => {
  const L = mapper(0, 0, 2.376, 3), R = mapper(660, 0, 2.376, 3);
  const l = mapper(0, 510, 2.376, 2.272), r = mapper(660, 510, 2.376, 2.272);
  const bx = i => 16.4 + 7 * i, ty = k => 147.4 + k * 9.22;
  let o = '<g class="crisp">';
  const gx = [39,172,305,372,388,521,655,787,920,1053,1070,1086,1103,1236,1369,1502].map(x => x / 2.376).concat([34,51,184,317,450,516,533,666,783,799,932,1065,1099,1115].map(x => 660 + x / 2.376));
  gx.forEach(x => { o += seg(x, 62, x, 1005, '#cfccc6'); });
  [147,259,369,479,550,617,648,720,941,989].forEach(y => { o += seg(8, y, 1259, y, '#cfccc6'); });
  o += seg(8, 129, 1259, 129, '#b0b0b0', 1, 'stroke-dasharray="1 1"');
  // oscillator background
  const zones = [['b',13,34],['p',34,55],['b',55,139],['p',139,153],['b',153,223],['p',223,293],['b',293,377],['p',377,384],['b',384,419],['p',419,601],['b',601,664],['p',664,741],['b',741,825],['p',825,993],['b',993,1042],['p',1042,1091],['b',1091,1126]];
  zones.forEach(z => { o += rect(z[1], 805, z[2] - z[1], 106, z[0] === 'b' ? '#a6c5e6' : '#e6b8d0'); });
  gx.forEach(x => { o += seg(x, 805, x, 911, '#c8c8d4'); });
  // stacked volume bars
  const vol = 'r109b166 y r100b182 r116b160 b130r144 b90r186 r132b144 b77r198 b57r205 r118b156 b93r182 b43 b91r185 b66 r100b212 y r118b160 r93b182 r124b152 b102r174 b118r157 b95r180 r109b165 r115b144 b110r160 b132r143 r130b144 b89r186 r116b160 r124b154 b118r158 y b98r178 r107b168 y r86b189 b118r158 r118b158 y b125r150 b64r211 b118r158 b100r176 b56r218 b111r165 y r114b162 b125r150 b111r165 r102b174 r125b150 r93b184 b105r171 b77r198 b111r165 y y r95b180 r95b180 r95b180 b98r178 y b120r155 y b105r171 r125b150 r77b198 r123b152 r89b186 r102b174 r109b166 b125r150 b127r148 b127r148 b116r160 r95b180 r105b171 y r127b148 y r105b171 r77b198 r123b152 b95r180 b100r176 r109b165 r118b158 b98r178 y r86b189 r105b171 b107r168 r123b152 b125r150 r120b155 b132r143 r66b209 r73b202 r77b198 r91b184 r118b158 b109r166 r118b158 b127r148 b109r166 b102r172 b113r160 b111r164 b120r155 b41r234 y b77r198 r89b186 b89r186 r91b184 r127b148 r86b189 r57b218 r123b152 r98b178 r123b152 r80b195 r130b145 r100b175 b111r164 b116r160 b116r160 r111b164 r89b186 r91b184 b109r166 r109b166 y r55b220 y b120r155 b86r189 r107b168 b125r150 !r234 - - - - - b123r152 b105r170 r132b143 r118b157 r98b177 y b132r143 b132r143 r127b148 r118b157 b109r166 r132b143 b82r193 b130r145 !y125'.split(' ');
  vol.forEach((v, i) => {
    if (v === '-') return;
    const x = bx(i) - 3, Y = q => 510 + q / 2.272;
    if (v[0] !== '!') o += rect(x, 524, 6, 93, '#a9a9a9');
    if (v === 'y') v = 'y32';
    (v.match(/[rby]\d+/g) || []).forEach(m => { const q = Y(+m.slice(1)); o += rect(x, q, 5, 617 - q, { r: '#f00', b: '#00f', y: '#ff0' }[m[0]]); });
  });
  o += '</g>';
  // trade size average
  o += seg(8, 672, 1259, 672, '#707070', 3, 'stroke-dasharray="11 6"');
  o += runs(l, 'y39,388 56,370|n72,423 89,390|y106,365 122,298 139,355 156,325 172,318|n189,375|y205,330 222,288 239,325 255,300|n272,400|y289,368|n305,392 322,398 338,390|y355,333 372,338 388,335 405,362|n421,405|y438,350|n455,395|y471,360 488,335|n505,388 521,395|y538,365 555,365 571,340|n588,378|y605,368 621,410 638,350|n654,375|y671,345 688,350 704,322 721,352 738,330 754,288 771,358|n787,378 804,370|y821,360 838,348|n854,382 870,378|y887,398 904,320 920,318 937,345|n954,365 970,372 987,395 1004,405 1020,378|y1037,342 1053,368|n1070,368 1087,370|y1103,355 1120,368|n1137,402 1153,395 1170,408 1187,375|y1203,350 1220,352 1236,362 1253,352|n1270,420 1287,400|y1303,372|n1320,375|y1337,362|n1353,375 1369,435 1386,375|y1403,322 1420,325|n1436,375 1453,372|y1469,320|n1486,400 1502,403 1519,395|y1536,345|n1552,395 1568,395', 2);
  o += runs(r, 'y0,395 17,365|n34,377 51,378 68,437 84,425 101,412 117,393 134,400|y151,364|n167,383|y184,370 200,352 217,347 234,349 250,365 267,360 284,285 300,362 317,322|n333,417|y350,330|n367,390 383,375 400,422 417,438 433,382 450,403|y466,370|n483,393 500,375 516,392|y533,350 550,366 566,367|n583,397 600,398 616,398|y633,332|n649,382 666,370 683,445 699,383 716,370|y733,305|n749,402|y766,352|n782,445;y882,360 899,345|n915,373 932,378 949,410 965,382|y982,366 999,365|n1015,373 1032,378|y1049,340|n1065,372|y1082,320|n1098,370 1115,477', 2);
  // trade size distribution
  o += seg(8, 770, 1259, 770, '#555', 1, 'stroke-dasharray="2 2"');
  o += dist(9, 14, 769,
    [7,8,10,17,20,19,14,21,17,18,12,8,10,16,16,12,15,18,12,12,17,8,10,13,13,8,18,21,20,17,11,12,14,12,8,11,18,18,14,8,8,11,13,13,10,8],
    [15,18,14,10,2,9,4,4,12,15,16,9,15,14,4,10,12,4,12,6,14,16,11,14,11,10,4,6,8,10,12,10,8,11,18,16,4,6,10,13,14,17,12,6,8,17]);
  o += dist(653, 14, 769, [11,10,4,6,14,8,13,16,13,24,14,19,18,9,8,8,8,10,13,22,8,15,19,15], [12,9,20,18,14,8,7,6,4,8,9,18,22,12,18,15,12,9,9,14,18,8,14,8]);
  o += dist(1028, 7, 769, [5,8,12,8,6,4,6,8,8,7,6,14,8,15], [4,6,4,8,12,15,11,8,9,12,6,4,7,3]) + rect(1127, 768, 6, 2, '#6495ed');
  // oscillator
  o += seg(8, 827, 1259, 827, '#e01020', 2, 'stroke-dasharray="7 3"') + seg(8, 847.500, 1259, 847.500, '#f01020') + seg(8, 887, 1259, 887, '#00ff00', 2);
  const dots = (M, s) => s.split(' ').map(q => { const [a, b] = q.slice(1).split('-').map(Number); return line([M([a, 811]), M([b, 811])], COL[q[0]], 4, 'stroke-dasharray="4 3"'); }).join('');
  o += dots(l, 'w35-80 k88-112 w118-530 k533-560 w565-615 k618-680 w690-985 k990-1040 w1045-1095 k1100-1228 w1232-1262 k1266-1395 w1400-1545 k1550-1568') + dots(r, 'k0-72 y78-125 w130-225 k230-243 y263-305 k313-340 w345-375 k380-740 w745-760 k765-795 y800-840 k845-940 y944-972 w978-1005 k1045-1107');
  const dd = 'stroke-dasharray="2 2"';
  o += runs(l, 'g39,800 56,808|o72,820 89,822 106,822 122,815|g139,810 172,775 205,757 222,715 239,697 255,705 272,742 305,790|o338,818 355,818|g372,800 388,790 405,790 438,795 471,803 505,806 521,808|o538,820 605,820 654,830 688,822|g704,798 738,772 754,754 787,770 804,776 838,782 870,798 904,812 937,795 970,798 987,806|o1020,825 1053,822 1087,820 1120,822 1153,838 1170,865 1187,872 1203,862 1236,828 1253,822 1287,828 1337,835 1353,845 1369,874 1386,860 1403,830|g1420,815 1453,798 1469,786 1519,793 1536,788 1568,812', 2, dd);
  o += runs(r, 'o0,816 17,822 51,832 68,868 88,900;o127,900 134,880 151,850 184,820|g217,775 234,745 267,738 284,685 300,710 317,703 333,745 367,785 383,805|o400,815 433,850 450,860 500,855 533,845 566,835 600,830 649,830 666,835 683,845 716,835 749,820|g782,815 799,745 808,685;g851,685 865,735 882,775 899,805|o915,815 932,860 938,900;o982,900 999,840 1015,820|g1032,805 1040,755 1047,683;g1057,683 1065,700 1070,683', 2, dd);
  o += line(pts(l, '39,786 56,792 72,825 89,830 106,825 122,787 139,775 156,748 172,725 189,718 205,706 222,696 239,694 255,700 272,722 289,748 305,773 322,798 338,810 355,795 372,760 388,738 405,738 438,760 455,777 471,773 488,773 505,792 521,805 538,825 555,830 571,808 605,815 621,842 638,848 654,856 671,835 688,808 704,768 721,750 738,738 754,724 771,740 787,750 804,772 821,770 838,772 854,788 870,802 887,810 904,808 920,780 937,754 954,768 970,778 987,806 1004,830 1020,847 1037,838 1053,818 1070,803 1103,818 1120,830 1137,855 1153,868 1170,888 1187,889 1203,868 1220,840 1236,812 1253,812 1270,842 1287,855 1320,870 1337,860 1369,884 1386,868 1403,835 1420,806 1453,790 1469,770 1486,780 1519,795 1536,780 1553,806').concat(pts(r, '0,822 17,835 34,846 51,852 68,870 84,882 101,887 117,884 134,866 151,843 184,818 200,795 217,766 234,745 267,738 284,729 300,735 317,734 333,770 350,766 367,775 383,803 400,830 417,855 433,868 450,878 466,870 483,878 516,880 533,868 550,857 566,850 583,845 600,848 616,860 633,850 649,860 666,868 683,885 699,872 716,850 733,828 749,817 766,826 782,831 799,780 816,743 832,738 849,746 865,788 882,797 899,790 915,820 932,850 949,889 965,878 982,858 999,816 1015,808 1032,792 1049,753 1065,750 1082,722 1099,730')), '#0000f0', 2);
  // DOM bands
  o += seg(8, 964.500, 1259, 964.500, '#333', 1, 'stroke-dasharray="3 2"');
  o += line(pts(l, '39,1001 72,1001 89,995 106,1002 122,987 139,992 156,970 205,965 239,973 255,978 272,975 305,995 322,992 338,995 355,975 388,985 421,970 438,975 455,987 471,975 488,975 505,1003 538,985 555,992 571,987 588,992 605,935 621,988 654,975 671,980 688,965 704,955 738,967 754,960 771,978 804,975 821,968 854,990 870,995 904,983 920,975 954,998 970,1002 1037,992 1087,1000 1120,990 1137,968 1170,975 1187,985 1203,978 1236,992 1270,978 1303,985 1320,978 1353,988 1369,980 1403,998 1436,982 1486,975 1502,980 1519,972 1536,987').concat(pts(r, '0,995 17,988 34,997 51,992 68,985 84,998 117,985 151,992 184,992 200,972 234,975 250,982 267,974 284,984 333,970 367,970 383,952 417,948 450,935 466,938 483,955 500,948 516,945 533,936 550,948 566,942 616,958 633,962 649,947 683,978 716,960 733,975 749,972 766,985 782,990')), '#f02020', 2, dd);
  o += line(pts(l, '39,1067 72,1072 89,1078 122,1080 172,1098 189,1090 222,1078 272,1080 305,1090 322,1085 388,1085 438,1095 471,1085 505,1090 538,1095 571,1085 605,1092 638,1105 654,1102 671,1085 704,1072 754,1085 787,1080 821,1078 854,1092 870,1098 904,1082 937,1060 970,1078 1020,1078 1037,1085 1070,1065 1087,1085 1120,1080 1137,1078 1170,1102 1203,1090 1236,1080 1270,1088 1303,1085 1369,1095 1403,1080 1453,1088 1502,1078 1536,1082').concat(pts(r, '0,1092 34,1085 51,1092 101,1088 117,1110 134,1088 167,1082 184,1092 217,1072 250,1075 284,1080 317,1090 367,1092 400,1088 433,1095 466,1102 500,1090 533,1100 566,1110 600,1102 633,1085 683,1088 733,1085 766,1050 782,1045')), '#107810', 2, dd);
  o += line(pts(r, '885,1022 899,1020 932,1028 999,1025 1032,1020 1065,1024 1115,1016'), '#f02020', 2, dd) + line(pts(r, '882,1042 915,1043 948,1046 982,1042 1049,1042 1090,1044 1115,1050'), '#107810', 2, dd) + line(pts(r, '882,1031 1000,1030 1115,1031'), '#f00', 2) + line(pts(r, '882,1035 1000,1036 1115,1035'), '#008000', 2);
  const wave = (b, a, s) => { const q = []; for (let i = 0; i < 104; i++) q.push([bx(i), b + a * Math.sin(i * s) * Math.sin(i * .37 + 1)]); return q; };
  o += line(wave(962, 2, 1.1), '#f01010', 2) + line(wave(967, 2, .9), '#108010', 2);
  o += line(pts(r, '151,1028 184,1031 200,1022 217,1026 234,1022 300,1028 367,1025 383,1015 417,1027 433,1018 483,1022 516,1017 533,1023 583,1020 600,1016 649,1022 666,1017 700,1028 733,1026 782,1031'), '#f01010', 2) + line(pts(r, '151,1038 217,1040 260,1037 320,1040 383,1045 433,1042 466,1048 516,1042 566,1048 633,1038 666,1042 733,1040 782,1033'), '#108010', 2);
  o += line(pts(l, '39,1038 56,1045 72,1035 89,1033 106,1027 122,1068 139,1055 156,1078 189,1082 205,1075 222,1045 272,1048 289,1035 305,1013 338,1020 355,1062 372,1045 388,1035 421,1057 438,1040 455,1044 488,1038 505,1013 521,1040 538,1037 555,1015 571,1032 588,1028 605,1080 621,1040 654,1048 671,1062 688,1050 704,1068 721,1080 738,1080 754,1045 771,1050 787,1068 804,1058 821,1072 838,1045 870,1023 920,1060 937,1050 954,1020 987,1020 1020,1032 1037,1010 1070,1023 1087,1003 1103,1022 1153,1058 1170,1028 1187,1032 1203,1000 1236,1003 1253,1012 1287,1042 1303,1005 1337,1012 1353,1040 1369,1012 1386,1022 1436,1015 1469,1028 1486,1050 1502,1035 1519,1030 1536,1050').concat(pts(r, '0,1018 17,1040 34,1032 68,1030 84,1003 117,1003 151,1022 167,1035 184,1020 200,1067 217,1060 250,1062 267,1055 300,1020 317,1045 333,1055 350,1048 367,1050 417,1090 433,1100 450,1102 466,1100 483,1088 516,1102 533,1107 550,1093 566,1115 583,1105 600,1078 616,1095 633,1065 649,1083 666,1067 683,1105 699,1100 716,1085 733,1023 749,1048 766,1080 782,1085')), '#0000e8', 3);
  o += line(pts(r, '882,1047 899,1047 932,1023 999,1034 1015,1028 1049,1048 1082,1042 1099,1028 1115,1028'), '#0000e8', 3);
  // candles: colour, then high, open/close top, bottom and low in ticks below 1111
  const bars = 'r25 26 29 29,b25 27 29 29,y26 27 30 30,y26 29 30 30,y26 28 29 30,y23 24 28 28,y24 24 25 28,y22 22 25 26,b19 20 22 23,x20 20 20 22,b18 18 20 21,b15 15 18 18,b13 13 15 16,b10 12 13 14,b12 12 14 15,x12 14 14 14,b13 14 15 16,b15 15 16 17,x14 16 16 17,b12 13 16 16,b9 10 13 13,b7 8 10 11,b8 8 9 10,x8 10 10 11,x7 10 10 10,b10 10 11 12,b9 9 11 12,x7 9 9 10,y8 9 11 11,x10 11 11 13,y10 11 12 12,x10 12 12 13,y9 9 12 12,y9 9 11 11,x9 11 11 12,y11 11 14 15,y12 13 14 15,y12 13 14 15,y11 11 14 15,y9 10 11 12,y6 6 10 11,x5 6 6 7,b5 5 6 7,b2 3 5 5,b3 3 5 5,x4 5 5 7,b4 5 6 7,b3 4 6 7,x1 4 4 4,b4 4 6 6,x5 6 6 6,x6 6 6 8,b4 5 6 6,b1 2 5 5,b0 0 2 5,b0 0 3 4,x2 3 3 6,r3 3 6 7,x6 6 6 8,y5 6 7 8,y3 5 7 8,y3 4 5 6,y2 3 4 5,y2 3 5 6,y3 5 6 6,x6 6 6 8,r6 6 9 10,x8 9 9 9,r8 9 12 12,x11 12 12 13,r9 10 12 13,r7 9 10 11,b7 7 9 11,r6 7 9 9,r9 9 13 13,x12 13 13 16,x12 13 13 14,r13 13 14 15,r13 13 14 15,r13 13 16 16,r16 16 18 18,r15 16 17 18,b13 13 16 16,b11 12 13 14,b11 12 13 14,y11 12 13 14,y9 10 12 12,y9 10 12 12,x12 12 12 14,x12 12 12 14,y9 10 12 12,y9 10 13 13,y13 13 14 15,x13 14 14 16,r12 14 15 16,x13 15 15 16,r15 15 19 19,r19 19 20 21,r20 20 23 23,r22 23 24 24,r22 23 24 24,r20 21 23 24,r20 21 22 22,r19 21 22 22,b18 18 21 21,b17 17 18 19,y15 15 17 18,x13 15 15 15,y13 13 15 15,y9 10 13 13,b9 9 10 11,b6 7 10 10,b6 7 11 11,b6 7 11 11,b7 7 8 10,b8 8 11 11,x10 11 11 12,r11 11 14 14,x14 14 14 15,y14 14 15 16,y14 14 15 15,y14 14 16 17,x16 16 16 16,r16 16 17 17,r13 16 17 17,x15 16 16 17,x15 16 16 17,x16 16 16 18,r16 16 17 17,r17 17 19 20,r17 17 19 19,r17 17 19 20,r19 19 20 21,r19 20 22 22,r20 20 22 23,r18 19 20 21,b15 18 19 19,x16 18 18 19,r18 18 20 21,y19 19 20 21,y12 13 20 21,y5 5 13 14,y4 4 5 7,x2 4 4 8,b2 4 8 10,b5 6 8 12,b0 4 6 7,b4 4 8 11,b1 8 10 10,r8 10 18 18,y14 15 18 19,y6 14 15 15,y8 10 14 16,y7 10 12 15,y9 10 12 12,y2 3 10 10,b0 3 4 7,b-7 -5 4 5,b-5 -5 -4 -1,b-5 -4 -2 -2';
  o += '<g class="crisp">';
  bars.split(',').forEach((s, i) => { const v = s.slice(1).split(' ').map(Number).map(ty); o += candle(Math.round(bx(i)) + .5, s[0], v[0], v[1], v[2], v[3], 4); });
  o += '</g>';
  // moving averages
  o += runs(L, 'b39,1235 56,1232|y72,1232 147,1232|b160,1231 172,1230 190,1207 215,1140 240,1060 255,1013 272,980 289,957 305,940 322,931 338,926 355,908 372,885 388,850 405,822 421,807 438,792 455,786 471,779|y690,779|b712,777 725,772 740,755 754,720 771,700 787,682 804,670 821,650 837,632 870,626 915,626 937,605 970,581|r985,582|y1118,583|r1153,586 1170,610 1186,640 1203,657 1220,661 1250,662 1286,704 1320,738 1340,755 1353,775 1369,803 1386,814|b1403,813 1440,808|y1568,808', 2);
  o += runs(R, 'y0,806 20,808|r51,808 68,835 84,870 101,910 117,940 134,958 151,965 167,980 184,989|b217,974|y284,974|b300,970 317,948 333,922 350,880 367,845 383,825 400,812|r425,815|y500,813|r540,815 566,825 583,840 600,852 633,880 655,900 666,912 683,935 699,944 712,946|b766,946|y832,946|b849,934 865,916 882,882 899,832 915,800 932,785|r950,800|y1049,800|b1065,797 1082,768 1098,690 1116,646', 2);
  o += line(pts(L, '39,1427 89,1390 156,1360 189,1330 222,1295 240,1270 272,1222 305,1183 355,1140 388,1105 421,1075 455,1042 471,1033 505,1003 555,977 571,973 588,963 621,952 655,943 671,943 704,930 721,917 754,893 771,877 804,853 837,826 854,815 887,804 920,793 954,773 975,767 1004,766 1053,754 1087,739 1120,733 1170,733 1203,740 1236,745 1270,743 1310,757 1353,770 1386,787 1420,797 1453,796 1486,790 1519,790 1568,782').concat(pts(R, '20,790 60,793 101,820 151,862 184,878 217,891 234,893 267,887 300,866 350,822 383,802 417,793 466,800 500,812 550,828 600,845 650,858 683,868 716,884 733,882 760,888 799,892 816,888 849,857 865,840 882,833 915,800 932,785 982,775 1015,783 1049,784 1065,773 1082,767 1098,750')), '#700070', 3);
  o += line(pts(L, '39,1282 56,1274 89,1271 106,1266 122,1250 139,1242 160,1215 189,1177 215,1140 255,1065 272,1042 289,1020 305,1010 338,985 355,965 388,915 421,878 455,850 488,823 521,811 555,806 571,796 605,787 655,793 680,788 704,770 725,745 754,712 787,688 837,660 880,650 910,637 937,610 970,597 1020,600 1070,590 1110,590 1137,605 1170,637 1203,651 1250,655 1286,682 1340,718 1386,762 1420,772 1486,772 1519,769 1568,774').concat(pts(R, '17,782 51,795 84,835 117,875 151,910 184,930 217,931 250,915 267,906 300,867 333,835 350,815 383,799 417,797 450,808 500,830 533,842 600,857 650,885 699,915 750,925 782,937 799,925 832,868 849,842 882,795 899,772 915,763 932,758 960,780 982,788 1010,780 1032,780 1049,748 1065,733 1082,693 1098,658')), '#ffa010', 3);
  [[338,767],[89,1100],[538,658],[904,490],[1004,547]].forEach(p => { const q = L([p[0], p[1] + 62]); o += arrow(q[0], q[1], false); });
  [[139,1188],[372,802],[704,747],[920,608],[1436,828]].forEach(p => { const q = L(p); o += arrow(q[0], q[1], true); });
  [[17,740],[400,658],[916,462]].forEach(p => { const q = R([p[0], p[1] + 62]); o += arrow(q[0], q[1], false); });
  [[201,1050],[799,1023],[1032,828]].forEach(p => { const q = R(p); o += arrow(q[0], q[1], true); });
  // depth histogram
  const V = '#e070e0', C = '#70e4e4', B = '#7070e0', G = '#70b070', W = '#b07070', T = '#e8b470', K = '#e07070';
  o += rect(1241, 59, 18, 445, '#ff00ff', 'class="crisp"') + rect(1241, 504, 18, 5, '#fff') + rect(1241, 121, 9, 8, '#8b1010') + rect(1241, 129, 9, 73, '#32cd32');
  [[196,1099,V,653],[223,947,C,1091],[250,1046,B,902],[277,935,G,1114],[304,1089,W,682],[334,1112,T,620],[361,1315,K,49],[388,1203,K,380],[415,1070,T,733],[442,1089,W,713],[472,1061,G,759],[499,1081,B,689],[526,917,C,1159],[553,742,V,1654],[583,1051,'#b070a0',803],[610,919,'#c8a860',1167],[637,882,'#70c0c8',1257]].forEach(h => {
    const a = R([h[1], h[0]]); o += rect(a[0], a[1] - 3, 1220.600 - a[0], 6, h[2], 'fill-opacity=".55" stroke="#777"') + text(1244, a[1] + 3, h[3], 'text-anchor="end" fill="#fff" font-size="9"');
  });
  o += '<path d="M1184 256h22l-11 13z" fill="#f0f"/>';
  // frame, crosshair and axis
  o += '<g class="crisp">' + [513, 627, 730, 804, 911].map(y => seg(8, y, 1319, y)).join('') + seg(8, 1005, 1259, 1005) + seg(1259, 59, 1259, 1005) + seg(122, 59, 122, 1005) + gx.map(x => seg(x, 1005, x, 1012)).join('') + '</g>';
  const ax = (y, s) => { o += seg(1259, y, 1266, y) + text(1267, y + 4, s); };
  [1113,1112,1111,1110,1108,1107,1106,1105,1104,1103,1102].forEach(p => ax(147.400 + (1111 - p) * 36.870, p + '.00'));
  [[527,'8000'],[550,'6000'],[572,'4000'],[595,'2000'],[649,'5'],[673,'0'],[697,'-5'],[770,'0'],[940,'10000'],[990,'-10000']].forEach(a => ax(a[0], a[1]));
  o += tag(1261, 129, 41, '1111.50', '#000', '#fff') + tag(1261, 213, 41, '1109.22', '#00e', '#fff') + tag(1261, 219, 41, '1109.06', '#ffa500', '#000') + tag(1261, 249, 41, '1108.25', '#800080', '#fff') + tag(1261, 565, 25, '4594', '#a9a9a9', '#000') + tag(1261, 617, 7, '0', '#00e', '#fff') + tag(1261, 720, 17, '-10', '#a52a2a', '#fff') + tag(1261, 831, 22, '0.45', '#00f', '#fff') + tag(1261, 867, 7, '0', '#ff0', '#000') + tag(1261, 963, 22, '', '#d00', '#fff') + tag(1261, 956, 25, '3269', '#f01010', '#fff') + tag(1261, 972, 28, '-3261', '#008000', '#fff');
  [[18,'7:52'],[71,'08:12'],[122,'08:16:42'],[155,'2/19'],[218,'08:33'],[274,'08:54'],[330,'09:03'],[386,'09:24'],[442,'2/19'],[456,'2/19'],[519,'10:47'],[575,'11:09'],[673,'2/19'],[736,'12:28'],[792,'12:43'],[876,'2/19'],[939,'13:05'],[995,'15:47'],[1051,'00:44'],[1121,'2/22']].forEach(a => { o += text(a[0], 1022, a[1], mid); });
  put('chart-main', o);
})();

// ---------- volume ladder chart ----------
(() => {
  const H = 19.4, top = r => 140.7 + r * H;
  const shade = t => { const a = Math.min(Math.abs(t), 1), m = (u, v) => Math.round(u + (v - u) * a); return t > 0 ? `rgb(${m(250,0)},${m(250,128)},${m(248,0)})` : `rgb(255,${m(250,0)},${m(250,0)})`; };
  let o = '<g class="crisp">';
  for (let k = 0; k < 8; k++) o += seg(1998 + 80 * k, 62, 1998 + 80 * k, 889, '#ccc9c4');
  [130,246,363,479,596,712,796,881].forEach(y => { o += seg(1919, y, 2665, y, '#ccc9c4'); });
  const cell = (x, w, r, v, t, bold, box) => rect(x, top(r), w, H, shade(t), 'stroke="#000"') + text(x + w - 3, top(r) + 14, v, end + (bold ? ' font-weight="bold"' : '') + (Math.abs(t) > .55 && !bold ? ' fill-opacity=".75"' : '')) + (box ? rect(x, top(r), w, H, 'none', 'stroke="#ffa000" stroke-width="2"') : '');
  const cl = [
    [-1, 15, '.3 .3 .3* .9 .6 0 -.6 -.4 0', '0 0 0 0 0 0 0 0 0', 'r', 17, 19, 15, 23],
    [0, 14, '0.0 0.1 0.0 0.1 -0.3 -0.6* 0.3 -0.4 0.0', '0 .17 .58 .6 .88 .5 1 .38 0', 'r', 17.400, 19.400, 14.500, 22.400],
    [1, 15, '0.0 0.2 0.2* 0.1 -0.4 -0.4 -1.0', '0 .14 .58 .76 1 .47 .45', 'b', 17.400, 19.400, 15.500, 21.500],
    [2, 9, '0.0 0.4* 0.0 0.7 0.5 -0.1 0.6 0.2 -0.3', '0 1 .83 .63 .53 .72 .38 .18 .2', 'b', 10.500, 17.400, 9.400, 17.400],
    [3, 7, '0.1 0.0 0.5 -0.2 -0.3* 0.6 -0.9 -0.2', '0 .47 .42 .15 .42 1 .67 .1', 'r', 10.500, 11.500, 7.500, 14.500],
    [4, 0, '0.2 0.8 0.1* 0.5 0.5 0.8 0.7 0.6 0.2 0.0 -0.2 0.2 -0.2', '.2 1 .67 .9 .58 .75 .75 .64 .24 .64 1 .52 .17', 'b', 2.500, 11.500, .4, 12.500],
    [5, 2, '1.0 -0.2* 0.4 -0.4 -0.4', '.52 1 .55 .55 .18', 'r', 2.500, 3.500, 2.500, 6.500],
    [6, 4, '0.1 -0.1*', '1 1', 'r', 3.500, 5.500, 2.500, 5.500]];
  cl.forEach(([k, r0, vals, fr, c, b0, b1, w0, w1]) => {
    const x = 2017 + 80 * k, f = fr.split(' ').map(Number), vs = vals.split(' '), mx = Math.max(...vs.map(v => Math.abs(parseFloat(v))));
    vs.forEach((v, i) => { const w = 35 * f[i]; o += rect(x, top(r0 + i), 35, H, '#fffafa', 'stroke="#000"') + rect(x + 35 - w, top(r0 + i) + .5, w, H - 1, '#00f'); });
    o += seg(x + 38, top(w0), x + 38, top(w1)) + rect(x + 35, top(b0), 6, (b1 - b0) * H, c === 'b' ? '#00c' : '#f00', 'stroke="#000"');
    const boxes = [];
    let bolded = false;
    vs.forEach((v, i) => { const n = parseFloat(v), bx = v.endsWith('*'), bold = (k === 6) || (Math.abs(n) === mx && !bolded); if (bold) bolded = true; const s = cell(x + 41, 35, r0 + i, k < 0 ? '' : v.replace('*', ''), n / mx * .98 || (k === 3 && i === 1 ? -.08 : 0), bold, bx); bx ? boxes.push(s) : o += s; });
    o += boxes.join('');
  });
  const lv = [.2,1.1,1.8,3,1.8,2,1.2,.9,2.5,6.1,6.1,6.2,6.3,7.2,6.1,4.7,4.8,8.7,8.4,8.5,6.6,5.6,4.7,2.7,1.9,1.9,.2];
  const ld = [-.2,.3,-.3,0,0,0,1.1,3.9,4.5,4.6,4.6,4.6,4.6,4.6,5.2,5.5,6.1,6.4,6,6.2,6.7,6.7,4.5,4.6,5.1,5,5.1];
  const ra = [211,752,1112,273,898,299,323,845,1125,1436,467,110,1308,-58,-439,652,379,-466,79,-1710,-553,-1422,-383,-721,-455,-645,-245];
  const rb = [-219,323,-272,0,-1,0,1054,3868,4492,4645,4624,4638,4584,4554,5217,5470,6092,6429,6012,6232,6711,6696,4532,4575,5137,5022,5084];
  lv.forEach((v, i) => {
    const w = 50 * v / 8.7;
    o += rect(1919, top(i), 50, H, '#fffafa', 'stroke="#000"') + rect(1969 - w, top(i) + .5, w, H - 1, '#00f') + text(1965, top(i) + 14, v.toFixed(1), end + ' font-weight="bold" fill="' + (v > 4.5 ? '#fff' : '#000') + '"');
    o += cell(1969, 40, i, ld[i].toFixed(1), ld[i] / 6.7, i === 20);
    o += cell(2575, 40, i, ra[i].toLocaleString('en-US'), ra[i] / 1710, i === 19) + cell(2615, 50, i, rb[i].toLocaleString('en-US'), rb[i] / 6711, i === 20);
  });
  ['', '-0.8', '-1.4', '2.0', '-0.4', '4.2', '0.4', '0.0'].forEach((v, k) => { o += rect(1937 + 80 * k, 722, 76, 20, [0, 3, 5, 6].includes(k) ? '#80c080' : '#ff8080', 'stroke="#000"') + text(2010 + 80 * k, 736, v, end); });
  const Y = q => 520 + q / 2.904;
  [['b868', 'r889'], ['r862', 'b894'], ['r848', 'b909'], ['b833', 'r923'], ['r868', 'b889'], ['b790', 'r967'], ['b865', 'r891'], ['y857']].forEach((s, k) => {
    const x = 1975 + 80 * k;
    if (k < 7) o += rect(x - 4, 764, 8, 60, '#a9a9a9');
    s.forEach(q => { const w = { b: 18, r: 12, y: 8 }[q[0]], y = Y(+q.slice(1)); o += rect(x - w / 2, y, w, 881 - y, { b: '#00f', r: '#f00', y: '#ff0' }[q[0]]); });
  });
  o += seg(1919, 751, 2726, 751) + seg(1919, 889, 2666, 889) + seg(2666, 57, 2666, 889) + '</g>';
  const ax = (y, s) => { o += seg(2666, y, 2672, y) + text(2672, y + 4, s); };
  for (let p = 1113.5; p >= 1105.5; p -= .5) if (p !== 1111.5) ax(91.500 + (1113.5 - p) * 77.600, p.toFixed(2));
  [[768, '8000'], [796, '6000'], [825, '4000'], [854, '2000']].forEach(a => ax(a[0], a[1]));
  o += tag(2667, 246, 41, '1111.50', '#000', '#fff') + tag(2667, 815, 25, '4594', '#a9a9a9', '#000') + tag(2667, 881, 7, '0', '#00e', '#fff');
  ['02:33', '03:20', '04:05', '04:19', '04:44', '04:55', '2/22', '05:14'].forEach((s, k) => { o += seg(1998 + 80 * k, 889, 1998 + 80 * k, 896) + text(1997 + 80 * k, 906, s, mid); });
  put('chart-gom', o);
})();

// ---------- 6 range chart ----------
(() => {
  const L = mapper(2720, 0, 3, 2.24), R = mapper(3150, 0, 3, 2.272);
  let o = '<g class="crisp">';
  const gx = [2741, 2801, 2861, 2921, 2981, 3041, 3101, 3161, 3221, 3281, 3294, 3297, 3347, 3350, 3410];
  gx.forEach(x => { o += seg(x, 57, x, 661, '#fff'); });
  [82, 174, 267, 360, 451, 571].forEach(y => { o += seg(2734, y, 3523, y, '#fff'); });
  [2828, 3035, 3359].forEach(x => { o += seg(x, 57, x, 598, '#b8b8b8'); });
  o += rect(2734, 131, 90, 319, '#fffafa');
  [[158,60,'#eef2ee'],[178,15,'#e4eee4'],[215,20,'#f0f2ee'],[235,15,'#98cc98'],[250,20,'#f2f2ee'],[265,27,'#d8e8d8'],[292,22,'#8cc68c'],[314,16,'#a0d0a0'],[330,20,'#80c080'],[350,50,'#b4dab4'],[400,46,'#98cc98'],[446,4,'#f01010']].forEach(a => { o += rect(2784, a[0], 40, a[1], a[2]); });
  // volume profile silhouette
  o += '</g>' + `<polygon fill="#000" points="${d(pts(L, '192,362 180,370 174,384 160,390 152,402 154,428 140,438 118,440 128,455 122,478 138,486 146,505 154,520 154,534 138,540 142,552 120,562 108,580 130,592 158,600 160,625 168,640 164,668 140,680 140,700 132,712 134,730 118,740 92,748 100,765 88,780 66,792 72,806 50,820 42,834 60,845 72,858 88,880 108,895 124,905 150,918 158,945 150,962 158,978 130,988 148,998 176,1006 192,1006'))}"/>`;
  // envelopes
  const env = pts(L, '65,645 90,647 120,658 160,655 200,638 240,632 275,632 300,620 325,605 333,633 370,625 405,632 440,638 460,630 490,612 515,610 545,625 590,625 630,605 680,575 712,556 740,560 780,555 830,547 870,545 890,525 920,485 945,460 965,440 985,438 1010,450 1040,475 1070,490 1100,508 1150,515 1200,530 1250,560').concat(pts(R, '0,586 40,610 80,624 120,615 160,588 190,580 215,565 250,530 280,515 310,492 340,487 375,492 400,485 430,450 470,405 500,365 530,325 560,320 595,322 630,315 638,298 680,270 710,250 745,236 800,238 820,232 845,214'));
  const ds = 'stroke-dasharray="7 2 2 2"';
  const shift = dy => env.map(p => [p[0], p[1] + dy + (p[0] < 2900 ? dy * .06 : 0) + (p[0] > 3350 ? dy * .04 : 0)]);
  o += '<g clip-path="url(#clip-range)">' + line(shift(-38), '#e4e4d0', 1) + line(shift(270), '#e4e4c8', 1, 'stroke-dasharray="5 3"') + line(env, '#000050', 2, ds) + line(shift(40), '#700070', 2, ds) + line(shift(81), '#a800a8', 2, ds) + line(shift(152), '#0000f0', 2, ds) + line(shift(193), '#7878e8', 2, ds) + line(shift(230), '#ff00ff', 2, ds) + '</g>';
  // candles
  const bars = (M, s) => s.trim().split(/\s*;\s*/).map(q => { const [x, c, h, t, b, l] = q.split(' '), y = v => M([0, +v])[1]; return candle(Math.round(M([+x, 0])[0]) + .5, c, y(h), y(t), y(b), y(l || b), 3); }).join('');
  o += '<g class="crisp">' + bars(L, '317 b 760 768 805 830;326 b 735 745 782 840;335 b 735 745 790;344 r 785 795 825 835;353 r 795 800 830 850;362 r 785 797 830;371 r 845 848 892;380 y 865 875 915;389 y 870 885 925;398 r 868 875 920;407 r 865 873 922;416 r 868 875 915;425 r 870 875 933;434 r 830 848 905;443 y 795 822 850;452 y 775 788 842;461 y 752 778 810;470 y 780 808 835;480 b 785 810 840;488 b 775 800 835;497 b 770 778 832;506 r 830 842 865;515 y 865 872 908;524 r 890 915 935;533 r 910 922 968;542 r 905 915 975;551 r 865 870 915;560 b 838 845 880;569 r 820 830 875;578 b 820 832 878;587 y 770 778 830;596 y 758 770 820;605 b 785 795 838;614 b 795 800 838;623 b 760 770 790;632 b 710 718 765;641 b 700 710 758;650 b 735 745 760;659 b 685 692 735;668 b 678 690 740;677 b 690 700 745;686 b 675 682 722;695 b 660 668 712;704 r 735 745 760;713 r 762 768 808;722 y 790 800 850;731 y 820 828 858;740 y 770 780 808;749 y 738 745 785;758 y 710 742 760;767 y 718 740 768;776 y 735 745 770;785 y 712 718 745;794 y 740 752 795;803 y 740 750 790;812 y 745 752 796;821 y 742 750 792;830 y 740 748 800;839 y 745 758 800;848 b 718 728 745;857 b 700 710 735;866 b 680 686 715;875 b 630 634 675;884 b 575 582 625;893 b 560 570 600;902 b 530 545 600;911 b 530 537 585;920 b 540 545 580;929 b 502 537 560;938 b 530 542 558;947 b 535 548 570;956 b 540 545 590;964 r 585 595 640;973 r 640 645 675;982 y 665 678 700 725;991 y 655 668 700;1000 y 700 705 755;1009 y 750 760 780;1018 r 780 788 815;1027 r 785 800 830;1036 r 730 738 780;1045 r 720 728 775;1054 r 745 750 800;1063 r 795 812 838;1072 r 820 822 845 890;1081 r 770 788 830;1090 r 770 780 825;1099 r 785 795 828;1108 y 765 772 820;1117 y 760 768 825;1126 y 770 778 800;1135 y 800 810 845;1144 y 830 855 880;1153 r 860 870 890 925;1162 y 850 862 885;1171 y 835 842 868;1180 y 840 850 880;1189 y 800 805 855;1198 y 790 795 850;1207 y 785 790 860;1216 y 830 850 890;1225 y 850 860 900;1234 y 840 850 900;1243 r 880 890 910;1252 r 865 885 935;1261 r 900 915 940;1270 y 850 862 900;1279 y 835 838 885;1288 y 870 885 930;1297 r 900 915 945 985')
    + bars(R, '8 r 910 928 950;17 r 920 930 958 990;26 r 925 935 958;35 r 910 918 955 1000;44 r 905 912 965;53 r 935 950 985;62 r 950 958 998;71 r 890 900 940;80 y 885 905 935;89 y 850 860 885;98 y 800 808 850;107 y 790 800 842;116 y 845 850 870;125 b 820 835 872;134 b 815 828 872;143 b 830 845 878;152 b 810 818 835;161 b 775 783 808;170 b 745 758 780;179 b 718 752 770;188 b 735 740 780;197 b 680 686 728;206 b 630 643 675;215 b 620 625 660;224 b 612 618 665;233 b 640 678 690;242 b 655 668 705;251 b 650 672 708;260 r 690 700 725;269 b 685 700 735;278 y 625 635 672;287 y 600 625 650;296 y 655 658 668;305 y 668 676 692;314 y 700 704 712;323 y 715 730 768;332 y 720 735 782;341 y 730 738 775;350 y 735 740 788;359 y 695 702 725;368 y 680 685 695;377 y 640 645 675;386 b 610 615 640;395 b 580 605 632;404 b 600 605 640;413 b 595 602 620;422 b 560 572 612;431 b 540 545 570;440 b 495 502 535;449 b 470 475 500;458 b 450 458 510;467 b 440 455 495;476 b 430 440 485;485 b 380 390 428;494 b 370 378 428;503 b 365 372 430;512 b 365 375 412;521 b 420 426 435;530 b 400 430 470;538 r 410 415 462;547 y 450 460 480;556 y 450 468 512;565 y 490 495 515;574 y 505 512 525 570;583 y 465 475 505;592 y 415 425 462;601 y 405 415 462;610 y 470 478 510;619 y 495 500 530 560;628 y 490 497 537;637 y 490 500 535;646 y 460 465 480;655 y 420 425 455;664 b 378 385 432;673 b 372 378 410;682 b 385 395 430;691 b 385 395 440;700 b 400 410 445;709 b 370 375 410;718 b 358 365 405;727 b 390 395 430;736 b 392 398 435;745 r 420 425 480;754 y 470 475 490 530;763 y 425 430 460;772 y 425 430 470;781 y 425 435 472;790 y 440 445 480;799 y 450 455 485;808 y 390 397 440;817 y 380 390 430;826 b 360 372 415;835 b 305 310 360;844 b 298 302 345') + '</g>';
  o += runs(L, 'b312,820 345,823;r370,820 400,822 430,842;b600,870 620,862 640,830 670,775 700,745|y710,753 860,753|b880,720 910,655 940,605 960,588|y970,605 1005,605|r1020,610 1050,660 1070,735 1100,760 1130,768|y1170,772 1240,772|r1260,785 1290,788', 2);
  o += runs(R, 'r-10,800 10,800 30,815 50,860 70,892|b120,893 145,893 180,840 215,745 245,717|y350,717|b390,712 430,650 470,540 500,485 535,458|y650,458|b680,450 720,430 745,430|y800,430|b845,400', 2);
  o += line(pts(L, '65,938 90,940 120,950 170,938 220,925 270,925 300,905 340,885 380,875 430,885 470,870 510,862 545,880 590,880 620,862 660,840 700,818 730,812 760,815 830,802 860,800 890,775 920,740 945,715 965,697 1000,705 1030,725 1060,745 1100,763 1150,772 1200,790 1250,815').concat(pts(R, '0,845 40,870 80,888 120,875 160,862 190,850 215,830 250,800 280,780 310,755 340,748 375,755 400,740 430,712 470,655 500,615 530,590 560,582 600,580 640,578 680,555 710,535 745,515 800,517 832,503')), '#700070', 3);
  o += line(pts(L, '65,858 90,870 120,885 160,875 190,880 220,876 250,876 290,855 320,835 350,827 380,835 430,862 480,845 505,842 540,870 590,870 620,845 660,805 690,770 730,778 760,770 840,772 870,755 900,700 930,655 960,635 1000,665 1050,710 1080,750 1130,772 1180,795 1220,815 1260,840').concat(pts(R, '0,875 40,905 75,917 100,900 150,880 190,830 215,785 250,755 280,725 310,715 345,728 370,720 400,695 430,665 470,595 500,540 530,500 570,502 600,492 640,500 680,470 710,448 740,445 800,448 832,430')), '#ffa010', 3);
  const ar = (M, s, up) => parse(s).forEach(p => { const q = M(p); o += arrow(q[0], q[1], up, 19, 9); });
  ar(L, '200,855 235,860 361,785 513,855 711,752 963,587 1144,828 1216,835', false);
  ar(L, '127,908 217,880 262,890 443,872 559,890 767,767 1117,820 1208,837', true);
  ar(R, '259,672 538,412 745,427', false);
  ar(R, '88,912 376,693 655,475 817,413', true);
  [[298,'#e0ece0'],[307,'#90c890'],[316,'#58a858'],[325,'#d0e4d0'],[333,'#60b060'],[342,'#dce8dc'],[360,'#7cbc7c'],[368,'#58a858'],[376,'#209020'],[385,'#a8d4a8'],[394,'#dce8dc'],[403,'#209020'],[412,'#e4ece4'],[421,'#ffb8b8'],[430,'#b0d8b0'],[438,'#ffd0d0'],[446,'#ffa8a8'],[455,'#ffe8e8'],[464,'#f81818'],[473,'#ff9898'],[482,'#e83030'],[490,'#ffa8a8'],[500,'#ffd0d0'],[509,'#ff9898'],[518,'#ffa0a0'],[526,'#ffd0d0']].forEach(a => { o += rect(3474, a[0] / 2.272, 49, 4, a[1]); });
  // distribution
  o += seg(2734, 534, 3523, 534, '#555', 1, 'stroke-dasharray="2 2"');
  o += dist(2735, 7, 533, [2,7,8,8,9,14,12,4,3,4,7,8,22,20], [4,8,7,6,12,13,8,6,4,6,8,7,24,20]);
  o += rect(2832, 531, 36, 2, '#6495ed') + rect(2832, 533, 36, 2, '#f00') + dist(2867, 8, 533, [1,1,2,5,8,15,8,9,9,8,4,14,13,14,12,8,18,12,17,26,38,44], [1,2,6,8,10,13,8,7,11,10,6,12,11,16,12,22,14,10,14,15,34,50]);
  o += rect(3042, 533, 110, 2, '#f00') + dist(3150, 9, 533, [1,1,2,2,3,10,7,4,9,5,5,3,7,8,10,9,32,14,17,16,20,16,26], [1,2,1,2,3,4,3,5,9,7,6,9,6,4,11,9,32,12,16,20,24,18,36]) + rect(3357, 531, 8, 3, '#0000b8') + rect(3379, 531, 58, 2, '#6495ed') + rect(3377, 533, 60, 2, '#f00');
  // oscillator
  o += '<g class="crisp">';
  const edges = [2742,2761,2785,2791,2797,2806,2840,2865,2890,2905,2957,2974,3042,3091,3102,3121,3124,3178,3235,3274,3328,3367,3397,3421,3430];
  edges.slice(0, -1).forEach((x, i) => { o += rect(x, 599, edges[i + 1] - x, 62, i % 2 ? '#a6c5e6' : '#dea0b0'); });
  gx.forEach(x => { o += seg(x, 599, x, 661, '#eee'); });
  o += '</g>' + seg(2734, 619, 3523, 619, '#f01020', 2, 'stroke-dasharray="7 3"') + seg(2734, 626.500, 3523, 626.500, '#f01020') + seg(2742, 632, 3430, 632, '#fff', 4) + seg(2734, 638, 3523, 638, '#10e020', 2) + seg(2734, 644, 3523, 644, '#10e020', 2, 'stroke-dasharray="8 3"');
  [[2740,2758],[2785,2792],[2799,2806],[2845,2858],[2915,2923],[3014,3022],[3041,3052],[3071,3142],[3155,3176],[3182,3190],[3218,3228],[3240,3268],[3330,3364],[3398,3420]].forEach(a => { o += seg(a[0], 632, a[1], 632, '#000', 4); });
  const osc = pts(L, '65,1435 80,1437 105,1452 130,1398 160,1395 200,1425 215,1412 240,1420 260,1395 325,1380 345,1405 378,1475 395,1458 425,1440 450,1388 495,1390 520,1430 533,1455 550,1435 575,1398 600,1388 640,1378 660,1387 690,1382 705,1408 722,1447 745,1420 775,1402 810,1418 845,1405 880,1360 905,1365 920,1385 945,1390 970,1430 1010,1472 1040,1432 1070,1445 1115,1410 1150,1450 1200,1410 1250,1450 1280,1430').concat(pts(R, '0,1460 25,1460 40,1465 60,1452 100,1395 140,1430 165,1398 190,1398 210,1378 225,1390 260,1450 290,1425 340,1472 380,1405 410,1403 440,1385 465,1390 490,1405 530,1425 575,1480 600,1440 630,1468 665,1405 720,1418 755,1455 800,1445 835,1395'));
  o += line(osc.map((p, i) => [p[0] - 2, p[1] * .8 + 127 + (i % 3)]), '#10e020', 3, 'stroke-dasharray="2 2"') + line(pts(L, '345,1410 378,1465 425,1455'), '#ff4500', 3, 'stroke-dasharray="2 2"') + line(pts(L, '505,1420 533,1467 560,1430'), '#ff4500', 3, 'stroke-dasharray="2 2"') + line(pts(L, '965,1430 1000,1475 1050,1420 1150,1430 1280,1430'), '#ff4500', 3, 'stroke-dasharray="2 2"') + line(osc, '#0000f0', 2);
  o += '<g class="crisp">' + seg(2734, 474, 3593, 474) + seg(2734, 598, 3593, 598) + seg(2734, 661, 3523, 661) + seg(3523, 56, 3523, 661) + gx.map(x => seg(x, 661, x, 667)).join('') + '</g><g class="t13">';
  const ax = (y, s) => { o += seg(3523, y, 3529, y) + text(3531, y + 5, s); };
  [1116,1114,1112,1108,1106,1104,1102,1100,1098,1096,1094,1092].forEach(p => ax(82.500 + (1116 - p) * 15.400, p + '.00'));
  [[498, '50000'], [534, '0'], [571, '-50000']].forEach(a => ax(a[0], a[1]));
  o += tag(3525, 187, 52, '1109.24', '#ffa500', '#000', 15) + tag(3525, 174, 52, '1110.04', '#00f', '#fff', 15) + tag(3525, 151, 52, '1111.50', '#000', '#fff', 15) + tag(3525, 220, 52, '1107.00', '#800080', '#fff', 15) + tag(3525, 614, 37, '0.324', '#0000e0', '#fff', 15) + tag(3525, 632, 10, '0', '#fff', '#000', 15);
  [['3:10', 2747], ['11:27', 2801], ['01:24', 2861], ['06:44', 2921], ['08:30', 2981], ['13:30', 3041], ['13:50', 3101], ['20:41', 3159], ['05:56', 3220], ['2/19', 3292], ['2/19', 3346], ['02:27', 3410]].forEach(a => { o += text(a[1], 679, a[0], mid); });
  put('chart-range', o + '</g>');
})();

// ---------- daily chart ----------
(() => {
  const M = mapper(2700, 680, 1.742, 3);
  let o = '<g class="crisp">';
  [130, 243, 334, 424, 538, 651, 764, 877, 991, 1104, 1217].forEach(x => { const q = M([x, 0])[0]; o += seg(q, 748, q, 996, '#fff'); });
  [859, 983].forEach(y => { o += seg(2734, y, 3531, y, '#fff'); });
  '85 x 528 555 555 565;107 y 515 518 528 565;130 x 472 485 485 515;152 b 477 509 514 543;175 b 465 488 502 522;198 b 540 556 574 595;220 x 542 555 555 612;243 y 452 490 518;266 b 440 455 466 470;288 x 430 440 440 472;311 b 400 404 423;334 b 373 382 394 412;356 b 372 378 406;379 b 402 404 424 428;401 b 388 392 457 470;424 b 357 362 418;447 b 332 338 362;469 b 320 336 346 355;492 b 298 305 346 368;515 b 278 282 321;538 b 245 251 274 305;560 b 298 319 324 368;583 b 255 284 318 360;606 b 245 257 286 305;628 r 264 272 340 368;651 b 305 311 317;673 b 248 250 342;696 y 290 299 324 383;719 y 300 323 472;741 y 465 490 592 626;764 y 540 553 582 600;786 y 538 607 618 626;809 y 562 572 618;832 r 552 556 626;854 x 580 626 626 626;877 r 618 623 626;900 r 530 562 612;922 r 540 566 576 598;1126 y 575 582 626;1149 y 538 542 548 582;1172 y 495 503 560;1194 y 468 503 532 548;1217 b 458 466 501'.split(';').forEach(q => {
    const [x, c, h, t, b, l] = q.split(' '), y = v => M([0, +v])[1];
    o += candle(Math.round(M([+x, 0])[0]) + .5, c, y(h), y(t), y(b), y(l || b), 7);
  });
  o += '</g>';
  o += line(pts(M, '85,469 130,464 200,460 243,452 288,446 334,418 379,400 424,392 469,368 538,320 583,302 606,288 651,262 673,250 696,241 740,246 786,270 809,280 877,320 922,343 946,375 991,422 1037,470 1070,500 1126,542 1172,553 1217,542'), '#0000f0', 2);
  o += runs(M, 'y85,596 107,596|b140,594 200,589|y243,589|b266,580 300,540 334,508 379,480 401,470 447,432 538,362 583,346 606,327 640,330 673,325|y809,325|r832,332 855,352 877,395 900,425 922,448 946,510 991,583 1025,626', 2);
  o += line(pts(M, '85,572 175,564 288,546 334,520 379,506 401,503 470,472 538,426 606,395 673,355 696,346 730,352 809,386 877,425 922,450 991,520 1037,570 1104,626'), '#0000f0', 2, 'stroke-dasharray="4 3"');
  o += line(pts(M, '325,626 379,608 401,605 470,575 538,528 606,490 651,468 673,456 696,450 740,460 809,490 877,530 922,552 991,626'), '#0000f0', 2) + line(pts(M, '330,626 401,605 470,575 538,540 606,512 651,497 690,483 720,482 786,495 840,512 877,519 922,520 991,553 1070,576 1104,580 1172,577 1217,568'), '#ffa010', 3) + line(pts(M, '388,626 470,590 538,558 606,530 651,515 719,500 740,502 809,530 900,565 946,580 1000,605 1060,626'), '#700070', 3);
  o += line(pts(M, '1185,628 1217,618'), '#700070', 3) + line(pts(M, '1185,650 1217,645'), '#0000f0', 2) + line(pts(M, '1185,750 1217,742'), '#0000f0', 2);
  o += '<g class="crisp">' + seg(3531, 748, 3531, 996) + seg(2734, 996, 3531, 996) + seg(3399, 996, 3399, 1003) + '</g><g class="t13">';
  [[776, '1140.00'], [818, '1120.00'], [901, '1080.00'], [943, '1060.00'], [984, '1040.00']].forEach(a => { o += seg(3531, a[0], 3537, a[0]) + text(3538, a[0] + 5, a[1]); });
  o += tag(3532, 835, 52, '1111.50', '#000', '#fff', 16) + tag(3532, 858, 52, '1099.47', '#00f', '#fff', 16) + tag(3532, 885, 52, '1087.25', '#800080', '#fff', 16) + tag(3532, 870, 52, '1095.15', '#ffa500', '#000', 16) + tag(3532, 895, 52, '1082.75', '#00f', '#fff', 16) + tag(3532, 927, 52, '1066.98', '#00f', '#fff', 16);
  o += text(3398, 1015, '22', mid);
  put('chart-daily', o + '</g>');
})();
```
